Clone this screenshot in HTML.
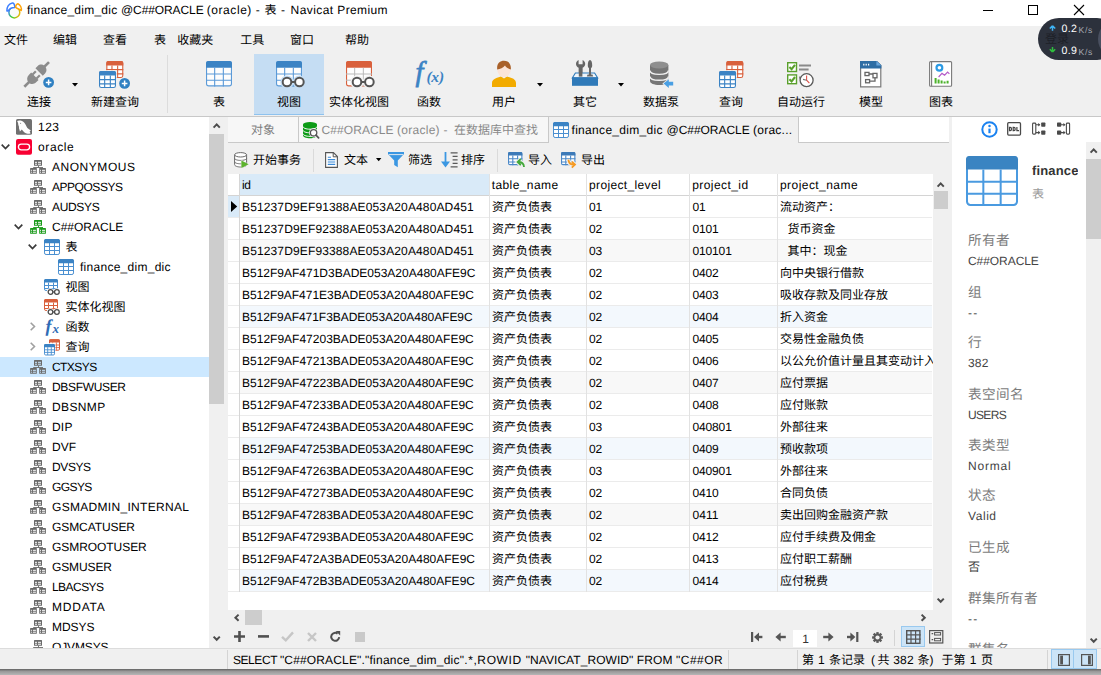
<!DOCTYPE html>
<html lang="zh"><head><meta charset="utf-8"><title>finance_dim_dic @C##ORACLE (oracle) - 表 - Navicat Premium</title><style>
html,body{margin:0;padding:0}
body{width:1101px;height:675px;overflow:hidden;background:#f0f0f0;position:relative;font-family:"Liberation Sans","Noto Sans CJK SC",sans-serif;font-size:12px;color:#000;text-rendering:geometricPrecision}
body div{position:absolute}
svg.a{position:absolute;overflow:visible}
.t{white-space:nowrap}
.t span{display:inline}
</style></head><body>
<div style="left:0px;top:0px;width:1101px;height:26px;background:#fff"></div>
<svg class="a" style="left:6px;top:2px" width="16" height="16.4" viewBox="0 0 16 16.4" ><defs><linearGradient id="lg" x1="0" y1="0.2" x2="1" y2="0.6"><stop offset="0" stop-color="#3d86f5"/><stop offset="0.5" stop-color="#3fd12f"/><stop offset="1" stop-color="#e9b80c"/></linearGradient></defs><circle cx="8.35" cy="10.45" r="5.45" fill="#fafafa" stroke="url(#lg)" stroke-width="1.5"/><path d="M0.9 8.9 C0.6 5.2 3 1.3 6.4 0.9 C8.2 0.8 8.7 3.2 8.9 5.4 C6.2 5.3 3.4 6.4 2.3 8.9 Z" fill="#fff" stroke="#3d7fff" stroke-width="1.5" stroke-linejoin="round"/><path d="M9.5 5.3 C9.8 3.6 10.8 1.9 11.9 1.7 C14.2 2.6 16 6 15.2 8.4 C14.2 7.6 11 6.6 9.5 5.3 Z" fill="#fff" stroke="#ffa40a" stroke-width="1.5" stroke-linejoin="round"/></svg>
<div class="t ttl" style="left:27px;top:0px;height:20px;line-height:20px;font-size:12px;color:#000;"><span style="letter-spacing:0.246px">finance_dim_dic&nbsp;</span><span style="letter-spacing:-0.099px">@C##ORACLE&nbsp;</span><span style="letter-spacing:0.554px">(oracle)&nbsp;</span><span style="letter-spacing:0.678px">-&nbsp;</span>表<span style="letter-spacing:1.143px">&nbsp;-&nbsp;</span><span style="letter-spacing:0.418px">Navicat&nbsp;</span><span style="letter-spacing:0.383px">Premium</span></div>
<svg class="a" style="left:975px;top:0px" width="126" height="26" viewBox="0 0 126 26" ><path d="M8 10.5H18" stroke="#000" stroke-width="1"/><rect x="53.5" y="5.5" width="9" height="9" fill="none" stroke="#000" stroke-width="1"/><path d="M99 5L109 15M109 5L99 15" stroke="#000" stroke-width="1.1"/></svg>
<div class="t " style="left:4px;top:29.7px;height:20px;line-height:20px;font-size:12px;color:#000;">文件</div>
<div class="t " style="left:53px;top:29.7px;height:20px;line-height:20px;font-size:12px;color:#000;">编辑</div>
<div class="t " style="left:103px;top:29.7px;height:20px;line-height:20px;font-size:12px;color:#000;">查看</div>
<div class="t " style="left:154px;top:29.7px;height:20px;line-height:20px;font-size:12px;color:#000;">表</div>
<div class="t " style="left:177.3px;top:29.7px;height:20px;line-height:20px;font-size:12px;color:#000;">收藏夹</div>
<div class="t " style="left:240.3px;top:29.7px;height:20px;line-height:20px;font-size:12px;color:#000;">工具</div>
<div class="t " style="left:290px;top:29.7px;height:20px;line-height:20px;font-size:12px;color:#000;">窗口</div>
<div class="t " style="left:345px;top:29.7px;height:20px;line-height:20px;font-size:12px;color:#000;">帮助</div>
<div style="left:0px;top:116px;width:1101px;height:1px;background:#c8c8c8"></div>
<div style="left:254px;top:54px;width:70px;height:61px;background:#c5ddf3;border-bottom:1.5px solid #8ec2ee;box-sizing:border-box"></div>
<svg class="a" style="left:24px;top:60px" width="32" height="28" viewBox="0 0 32 28" ><g transform="translate(12 15.1) rotate(45)" fill="#8c8c8c"><rect x="-1.3" y="8.5" width="2.6" height="8"/><path d="M-5.2 1.6 H5.2 V5 C5.2 8 3 10.4 0 10.4 C-3 10.4 -5.2 8 -5.2 5Z"/><rect x="-3.9" y="-2.6" width="2.2" height="4.6"/><rect x="1.7" y="-2.6" width="2.2" height="4.6"/><path d="M-5.2 -4.4 H5.2 V-7.6 C5.2 -10.4 3 -12.6 0 -12.6 C-3 -12.6 -5.2 -10.4 -5.2 -7.6Z"/><rect x="-1.3" y="-18.4" width="2.6" height="7"/></g><circle cx="24.6" cy="22.4" r="6.4" fill="#f0f0f0"/><circle cx="24.6" cy="22.4" r="5.4" fill="#2f80c2"/><path d="M24.6 19.6V25.2M21.8 22.4H27.4" stroke="#fff" stroke-width="1.5"/></svg>
<div class="t " style="left:27px;top:92.4px;height:20px;line-height:20px;font-size:12px;color:#000;">连接</div>
<svg class="a" style="left:72px;top:82.6px" width="6" height="4" viewBox="0 0 6 4" ><path d="M0 0H6L3 3.6Z" fill="#000"/></svg>
<svg class="a" style="left:98.8px;top:61px" width="32" height="28" viewBox="0 0 32 28" ><g transform="translate(7.3 0)"><rect x="0.55" y="0.55" width="15.9" height="15.9" rx="1.8" fill="#fff" stroke="#d9603c" stroke-width="1.1"/><path d="M0 1.8 a1.8 1.8 0 0 1 1.8 -1.8 h13.4 a1.8 1.8 0 0 1 1.8 1.8 v2.7 h-17 z" fill="#d9603c"/><path d="M0 8.66667 H17M0 12.8333 H17M5.66667 4.5 V17M11.3333 4.5 V17" stroke="#d9603c" stroke-width="1.1" fill="none"/></g><rect x="-0.8" y="9.2" width="18.6" height="9" fill="#f0f0f0"/><g transform="translate(0 10)"><rect x="0.55" y="0.55" width="15.9" height="15.9" rx="1.8" fill="#fff" stroke="#3b83c4" stroke-width="1.1"/><path d="M0 1.8 a1.8 1.8 0 0 1 1.8 -1.8 h13.4 a1.8 1.8 0 0 1 1.8 1.8 v2.7 h-17 z" fill="#3b83c4"/><path d="M0 8.66667 H17M0 12.8333 H17M5.66667 4.5 V17M11.3333 4.5 V17" stroke="#3b83c4" stroke-width="1.1" fill="none"/></g><circle cx="25.6" cy="22.4" r="6.2" fill="#f0f0f0"/><circle cx="25.6" cy="22.4" r="5.4" fill="#2f80c2"/><path d="M25.6 19.6V25.2M22.8 22.4H28.4" stroke="#fff" stroke-width="1.5"/></svg>
<div class="t " style="left:91px;top:92.4px;height:20px;line-height:20px;font-size:12px;color:#000;">新建查询</div>
<div style="left:167px;top:55px;width:1px;height:58px;background:#dcdcdc"></div>
<svg class="a" style="left:206px;top:61px" width="26" height="26" viewBox="0 0 26 26" ><rect x="0.55" y="0.55" width="24.9" height="24.3" rx="2.2" fill="#fdfdfd" stroke="#5b9ad8" stroke-width="1.1"/><path d="M0 2.2 a2.2 2.2 0 0 1 2.2 -2.2 h21.6 a2.2 2.2 0 0 1 2.2 2.2 v4.6 h-26 z" fill="#3b83c4"/><path d="M0 13 H26M0 19.2 H26M8.66667 6.8 V25.4M17.3333 6.8 V25.4" stroke="#5b9ad8" stroke-width="1.1" fill="none"/></svg>
<div class="t " style="left:213px;top:92.4px;height:20px;line-height:20px;font-size:12px;color:#000;">表</div>
<svg class="a" style="left:276px;top:61px" width="29" height="26" viewBox="0 0 29 26" ><rect x="0.55" y="0.55" width="24.9" height="24.3" rx="2.2" fill="#fdfdfd" stroke="#5b9ad8" stroke-width="1.1"/><path d="M0 2.2 a2.2 2.2 0 0 1 2.2 -2.2 h21.6 a2.2 2.2 0 0 1 2.2 2.2 v4.6 h-26 z" fill="#3b83c4"/><path d="M0 13 H26M0 19.2 H26M8.66667 6.8 V25.4M17.3333 6.8 V25.4" stroke="#5b9ad8" stroke-width="1.1" fill="none"/><g fill="#c5ddf3" stroke="#c5ddf3" stroke-width="4.6"><circle cx="11" cy="21" r="4.3"/><circle cx="23.4" cy="21" r="4.3"/><path d="M11 21 H23.4"/></g><circle cx="11" cy="21" r="4.3" fill="#fff" stroke="#555" stroke-width="2"/><circle cx="23.4" cy="21" r="4.3" fill="#fff" stroke="#555" stroke-width="2"/><path d="M15.3 21 H19.1" stroke="#555" stroke-width="2"/></svg>
<div class="t " style="left:277px;top:92.4px;height:20px;line-height:20px;font-size:12px;color:#000;">视图</div>
<svg class="a" style="left:346px;top:61px" width="29" height="26" viewBox="0 0 29 26" ><rect x="0.55" y="0.55" width="24.9" height="24.3" rx="2.2" fill="#fdfdfd" stroke="#d9603c" stroke-width="1.1"/><path d="M0 2.2 a2.2 2.2 0 0 1 2.2 -2.2 h21.6 a2.2 2.2 0 0 1 2.2 2.2 v4.6 h-26 z" fill="#d9603c"/><path d="M0 13 H26M0 19.2 H26M8.66667 6.8 V25.4M17.3333 6.8 V25.4" stroke="#b9b9b9" stroke-width="1" fill="none"/><g fill="#f0f0f0" stroke="#f0f0f0" stroke-width="4.6"><circle cx="11" cy="21" r="4.3"/><circle cx="23.4" cy="21" r="4.3"/><path d="M11 21 H23.4"/></g><circle cx="11" cy="21" r="4.3" fill="#fff" stroke="#555" stroke-width="2"/><circle cx="23.4" cy="21" r="4.3" fill="#fff" stroke="#555" stroke-width="2"/><path d="M15.3 21 H19.1" stroke="#555" stroke-width="2"/></svg>
<div class="t " style="left:329px;top:92.4px;height:20px;line-height:20px;font-size:12px;color:#000;">实体化视图</div>
<div class="t" style="left:415.6px;top:52.6px;font:italic 28.5px 'Liberation Serif',serif;color:#3b83c4;line-height:40px;height:40px;-webkit-text-stroke:0.7px #3b83c4">f</div>
<div class="t" style="left:426.4px;top:67.6px;font:italic bold 15.5px 'Liberation Serif',serif;color:#3b83c4;line-height:20px;height:20px;letter-spacing:-0.2px">(x)</div>
<div class="t " style="left:417px;top:92.4px;height:20px;line-height:20px;font-size:12px;color:#000;">函数</div>
<svg class="a" style="left:492px;top:60px" width="24" height="27" viewBox="0 0 24 27" ><path d="M0 27 V23 C0 19 5 17.5 9 16.5 L12 18.5 L15 16.5 C19 17.5 24 19 24 23 V27Z" fill="#f2ab00"/><ellipse cx="12" cy="9.6" rx="6.8" ry="7.6" fill="#fbe4d8"/><path d="M5.2 9.4 C4.6 3.6 7.8 0.8 12 0.8 C16.2 0.8 19.4 3.6 18.8 9.4 C16.4 9 14 7.6 13 5.6 C11.4 7.8 8 9.2 5.2 9.4Z" fill="#a9612a"/></svg>
<div class="t " style="left:492px;top:92.4px;height:20px;line-height:20px;font-size:12px;color:#000;">用户</div>
<svg class="a" style="left:536.6px;top:82.6px" width="6" height="4" viewBox="0 0 6 4" ><path d="M0 0H6L3 3.6Z" fill="#000"/></svg>
<svg class="a" style="left:572px;top:59px" width="26" height="28" viewBox="0 0 26 28" ><g fill="#666"><path d="M6.6 1 V5.2 H10.6 V1 C12.4 1.8 13.2 3.4 13.2 5 C13.2 6.8 12 8.2 10.4 8.8 V18 H6.8 V8.8 C5.2 8.2 4 6.8 4 5 C4 3.4 4.8 1.8 6.6 1Z"/><path d="M18 1 C19.4 1 20.2 3.4 20.2 6.6 C20.2 8 19.6 8.8 19 9.2 V15 H17 V9.2 C16.4 8.8 15.8 8 15.8 6.6 C15.8 3.4 16.6 1 18 1Z"/></g><path d="M3.4 14 H22.6 L25.6 18.8 H0.4Z" fill="#eef5fb" stroke="#2f7ab9" stroke-width="1.2"/><rect x="0" y="18.4" width="26" height="8.4" fill="#2f7ab9"/><g fill="#666"><rect x="6.8" y="8" width="3.6" height="9.6"/><rect x="17" y="9" width="2" height="7"/><path d="M15.6 15.4 h4.8 l.8 2.2 h-6.4z"/></g></svg>
<div class="t " style="left:573px;top:92.4px;height:20px;line-height:20px;font-size:12px;color:#000;">其它</div>
<svg class="a" style="left:618px;top:82.6px" width="6" height="4" viewBox="0 0 6 4" ><path d="M0 0H6L3 3.6Z" fill="#000"/></svg>
<svg class="a" style="left:649px;top:61px" width="26" height="28" viewBox="0 0 26 28" ><g fill="#767676"><path d="M1 4 V20 C1 22.4 5 24 10.2 24 C15.4 24 19.4 22.4 19.4 20 V4Z"/><ellipse cx="10.2" cy="4" rx="9.2" ry="3.4" fill="#8f8f8f"/></g><path d="M1 9.6 C1 12 5 13.4 10.2 13.4 C15.4 13.4 19.4 12 19.4 9.6 M1 15.4 C1 17.8 5 19.2 10.2 19.2 C15.4 19.2 19.4 17.8 19.4 15.4" fill="none" stroke="#f0f0f0" stroke-width="1.4"/><path d="M14.6 22.6 L19.8 18.2 V20.8 H24.2 V24.4 H19.8 V27Z" fill="#4a9fe3" stroke="#f0f0f0" stroke-width="1.6" paint-order="stroke"/></svg>
<div class="t " style="left:643px;top:92.4px;height:20px;line-height:20px;font-size:12px;color:#000;">数据泵</div>
<svg class="a" style="left:719px;top:61px" width="32" height="28" viewBox="0 0 32 28" ><g transform="translate(7.3 0)"><rect x="0.55" y="0.55" width="15.9" height="15.9" rx="1.8" fill="#fff" stroke="#d9603c" stroke-width="1.1"/><path d="M0 1.8 a1.8 1.8 0 0 1 1.8 -1.8 h13.4 a1.8 1.8 0 0 1 1.8 1.8 v2.7 h-17 z" fill="#d9603c"/><path d="M0 8.66667 H17M0 12.8333 H17M5.66667 4.5 V17M11.3333 4.5 V17" stroke="#d9603c" stroke-width="1.1" fill="none"/></g><rect x="-0.8" y="9.2" width="18.6" height="9" fill="#f0f0f0"/><g transform="translate(0 10)"><rect x="0.55" y="0.55" width="15.9" height="15.9" rx="1.8" fill="#fff" stroke="#3b83c4" stroke-width="1.1"/><path d="M0 1.8 a1.8 1.8 0 0 1 1.8 -1.8 h13.4 a1.8 1.8 0 0 1 1.8 1.8 v2.7 h-17 z" fill="#3b83c4"/><path d="M0 8.66667 H17M0 12.8333 H17M5.66667 4.5 V17M11.3333 4.5 V17" stroke="#3b83c4" stroke-width="1.1" fill="none"/></g></svg>
<div class="t " style="left:719px;top:92.4px;height:20px;line-height:20px;font-size:12px;color:#000;">查询</div>
<svg class="a" style="left:787px;top:61.5px" width="28" height="26" viewBox="0 0 28 26" ><g fill="#fff" stroke="#5aa02c" stroke-width="1.4"><rect x="0.7" y="0.7" width="8.8" height="8.8"/><rect x="0.7" y="12.9" width="8.8" height="8.8"/></g><path d="M2.4 5 L4.6 7.2 L8 2.8 M2.4 17.2 L4.6 19.4 L8 15" fill="none" stroke="#5aa02c" stroke-width="2.1"/><path d="M12 3.4 H24 M12 7.6 H21.6 M12 15.4 H14" stroke="#8a8a8a" stroke-width="2"/><circle cx="19.6" cy="18.2" r="6.5" fill="#fff" stroke="#5a5a5a" stroke-width="1.3"/><path d="M19.6 13.6 V18.2 L22.4 21.2" fill="none" stroke="#e0524a" stroke-width="1.1"/><path d="M19.6 18.2 L16 17.4" stroke="#777" stroke-width="1.1"/></svg>
<div class="t " style="left:777px;top:92.4px;height:20px;line-height:20px;font-size:12px;color:#000;">自动运行</div>
<svg class="a" style="left:860px;top:60.6px" width="21.4" height="26.4" viewBox="0 0 21.4 26.4" ><path d="M0.6 0.6 H16.6 L20.8 4.6 V25.8 H0.6Z" fill="#fff" stroke="#7a7a7a" stroke-width="1.2"/><path d="M0 0 H17 L21.4 4.2 V7.4 H0Z" fill="#2e6da4"/><path d="M16.4 0 L21.4 4.6 H16.4Z" fill="#6aa6dc"/><path d="M3.2 3.6h1.2M5.6 3.6h1.2M8 3.6h1.2" stroke="#fff" stroke-width="1.6"/><g fill="none" stroke="#666" stroke-width="1.3"><rect x="5" y="11.4" width="4" height="3.2"/><rect x="13" y="12.4" width="4" height="4.4"/><rect x="5.6" y="18.6" width="4" height="3.2"/><path d="M9 13H13M15 16.8V20.2H9.6"/></g></svg>
<div class="t " style="left:859px;top:92.4px;height:20px;line-height:20px;font-size:12px;color:#000;">模型</div>
<svg class="a" style="left:929px;top:61px" width="23.4" height="26" viewBox="0 0 23.4 26" ><rect x="0.6" y="0.6" width="22" height="24.6" rx="1" fill="#fff" stroke="#7a7a7a" stroke-width="1.1"/><path d="M2.6 0.6V25.2" stroke="#7a7a7a" stroke-width="1.1"/><circle cx="10.4" cy="6.8" r="2.9" fill="none" stroke="#2d9be4" stroke-width="2.2"/><path d="M9.6 16 L13 12.4 L15.6 14.2 L18.6 11 L20.4 12.8" fill="none" stroke="#b45cc8" stroke-width="1.2"/><path d="M6.6 17V22.6M9.6 18.4V22.6M12.6 19.4V22.6M15.6 20.4V22.6M18.6 19.8V22.6" stroke="#4db22c" stroke-width="2"/></svg>
<div class="t " style="left:929px;top:92.4px;height:20px;line-height:20px;font-size:12px;color:#000;">图表</div>
<div style="left:1038px;top:18px;width:80px;height:42px;border-radius:21px;background:#2c313c"></div>
<div style="left:1098px;top:20px;width:38px;height:38px;border-radius:19px;background:#4a5060"></div>
<div class="t " style="left:1045px;top:28.7px;height:20px;line-height:20px;font-size:12px;color:#000;"><span style="color:#1d2027">登录</span></div>
<svg class="a" style="left:1049.4px;top:24.8px" width="7" height="28" viewBox="0 0 7 28" ><path d="M3.5 0.8 L0.8 3.6 M3.5 0.8 L6.2 3.6 M3.5 1 V5.8" fill="none" stroke="#3fb4f6" stroke-width="1.5"/><path d="M3.5 27 L0.8 24.2 M3.5 27 L6.2 24.2 M3.5 26.8 V22" fill="none" stroke="#2fc03e" stroke-width="1.5"/></svg>
<div class="t " style="left:1061.6px;top:17.6px;height:20px;line-height:20px;font-size:12px;color:#fff;"><span style="letter-spacing:0.3px;font-size:10.6px">0.2</span><span style="font-size:8.6px;color:#a4a8b0;letter-spacing:0.75px;margin-left:1.2px;position:relative;top:1px">K/s</span></div>
<div class="t " style="left:1061.6px;top:39.9px;height:20px;line-height:20px;font-size:12px;color:#fff;"><span style="letter-spacing:0.3px;font-size:10.6px">0.9</span><span style="font-size:8.6px;color:#a4a8b0;letter-spacing:0.75px;margin-left:1.2px;position:relative;top:1px">K/s</span></div>
<div style="left:0px;top:117px;width:209px;height:531px;background:#fff;overflow:hidden"></div>
<div style="left:0px;top:357px;width:209px;height:20px;background:#cce8ff"></div>
<svg class="a" style="left:16px;top:119px" width="16" height="16" viewBox="0 0 16 16" ><rect width="16" height="15.8" rx="1.6" fill="#707070"/><path d="M1.1 2.1 C2 1.4 3.4 1.3 4.6 1.6 C6.6 2 8.2 3.4 9.2 5 C10.2 6.8 10.8 8.6 12 9.6 C12.8 10.4 13.8 10.8 14.8 11.2 C14.4 11.8 14 12.1 13.6 12.4 C14 13 14.4 13.6 14.6 14.2 C13.6 14.8 12.6 14.9 11.6 14.8 C10.4 14.6 9.2 14 8.2 13.2 C7.2 12.4 6.4 11.4 5.8 10.6 C5.2 11.4 4.6 12 3.9 12.4 C3.7 11.4 3.5 10.6 3.1 9.8 C2.9 9 3 8.4 3 7.8 C2.4 6.4 2.2 5.2 2.1 4.2 C1.9 3.4 1.5 2.8 1.1 2.1Z" fill="#fff"/><circle cx="4.6" cy="4.3" r="0.5" fill="#707070"/></svg>
<div class="t tr" style="left:38px;top:116.5px;height:20px;line-height:20px;font-size:12px;color:#000;letter-spacing:0.456px;">123</div>
<svg class="a" style="left:16px;top:139px" width="16" height="16" viewBox="0 0 16 16" ><rect width="16" height="15.8" rx="2" fill="#f80032"/><rect x="2.4" y="5.2" width="11.2" height="5.6" rx="2.8" fill="none" stroke="#fff" stroke-width="1.3"/></svg>
<div class="t tr" style="left:38px;top:136.5px;height:20px;line-height:20px;font-size:12px;color:#000;letter-spacing:0.619px;">oracle</div>
<svg class="a" style="left:30px;top:160px" width="16" height="14" viewBox="0 0 16 14" ><g fill="#6a6a6a"><rect x="4" y="0.1" width="8" height="5.7" rx="0.5"/><rect x="8" y="5.6" width="0.9" height="1.8"/><rect x="3.2" y="7" width="9.8" height="0.9"/><rect x="0.1" y="8.1" width="6.7" height="5.7" rx="0.5"/><rect x="9.2" y="8.1" width="6.7" height="5.7" rx="0.5"/></g><g fill="#fff"><rect x="5" y="1.8" width="2" height="1"/><rect x="8" y="1.8" width="3" height="1"/><rect x="5" y="3.7" width="2" height="1"/><rect x="8" y="3.7" width="3" height="1"/><rect x="0.9" y="9.8" width="1" height="1"/><rect x="2.9" y="9.8" width="3" height="1"/><rect x="0.9" y="11.7" width="1" height="1"/><rect x="2.9" y="11.7" width="3" height="1"/><rect x="10" y="9.8" width="1" height="1"/><rect x="12" y="9.8" width="3" height="1"/><rect x="10" y="11.7" width="1" height="1"/><rect x="12" y="11.7" width="3" height="1"/></g></svg>
<div class="t tr" style="left:52px;top:156.5px;height:20px;line-height:20px;font-size:12px;color:#000;letter-spacing:0.535px;">ANONYMOUS</div>
<svg class="a" style="left:30px;top:180px" width="16" height="14" viewBox="0 0 16 14" ><g fill="#6a6a6a"><rect x="4" y="0.1" width="8" height="5.7" rx="0.5"/><rect x="8" y="5.6" width="0.9" height="1.8"/><rect x="3.2" y="7" width="9.8" height="0.9"/><rect x="0.1" y="8.1" width="6.7" height="5.7" rx="0.5"/><rect x="9.2" y="8.1" width="6.7" height="5.7" rx="0.5"/></g><g fill="#fff"><rect x="5" y="1.8" width="2" height="1"/><rect x="8" y="1.8" width="3" height="1"/><rect x="5" y="3.7" width="2" height="1"/><rect x="8" y="3.7" width="3" height="1"/><rect x="0.9" y="9.8" width="1" height="1"/><rect x="2.9" y="9.8" width="3" height="1"/><rect x="0.9" y="11.7" width="1" height="1"/><rect x="2.9" y="11.7" width="3" height="1"/><rect x="10" y="9.8" width="1" height="1"/><rect x="12" y="9.8" width="3" height="1"/><rect x="10" y="11.7" width="1" height="1"/><rect x="12" y="11.7" width="3" height="1"/></g></svg>
<div class="t tr" style="left:52px;top:176.5px;height:20px;line-height:20px;font-size:12px;color:#000;letter-spacing:-0.467px;">APPQOSSYS</div>
<svg class="a" style="left:30px;top:200px" width="16" height="14" viewBox="0 0 16 14" ><g fill="#6a6a6a"><rect x="4" y="0.1" width="8" height="5.7" rx="0.5"/><rect x="8" y="5.6" width="0.9" height="1.8"/><rect x="3.2" y="7" width="9.8" height="0.9"/><rect x="0.1" y="8.1" width="6.7" height="5.7" rx="0.5"/><rect x="9.2" y="8.1" width="6.7" height="5.7" rx="0.5"/></g><g fill="#fff"><rect x="5" y="1.8" width="2" height="1"/><rect x="8" y="1.8" width="3" height="1"/><rect x="5" y="3.7" width="2" height="1"/><rect x="8" y="3.7" width="3" height="1"/><rect x="0.9" y="9.8" width="1" height="1"/><rect x="2.9" y="9.8" width="3" height="1"/><rect x="0.9" y="11.7" width="1" height="1"/><rect x="2.9" y="11.7" width="3" height="1"/><rect x="10" y="9.8" width="1" height="1"/><rect x="12" y="9.8" width="3" height="1"/><rect x="10" y="11.7" width="1" height="1"/><rect x="12" y="11.7" width="3" height="1"/></g></svg>
<div class="t tr" style="left:52px;top:196.5px;height:20px;line-height:20px;font-size:12px;color:#000;letter-spacing:-0.343px;">AUDSYS</div>
<svg class="a" style="left:30px;top:220px" width="16" height="14" viewBox="0 0 16 14" ><g fill="#1a9a1a"><rect x="4" y="0.1" width="8" height="5.7" rx="0.5"/><rect x="8" y="5.6" width="0.9" height="1.8"/><rect x="3.2" y="7" width="9.8" height="0.9"/><rect x="0.1" y="8.1" width="6.7" height="5.7" rx="0.5"/><rect x="9.2" y="8.1" width="6.7" height="5.7" rx="0.5"/></g><g fill="#fff"><rect x="5" y="1.8" width="2" height="1"/><rect x="8" y="1.8" width="3" height="1"/><rect x="5" y="3.7" width="2" height="1"/><rect x="8" y="3.7" width="3" height="1"/><rect x="0.9" y="9.8" width="1" height="1"/><rect x="2.9" y="9.8" width="3" height="1"/><rect x="0.9" y="11.7" width="1" height="1"/><rect x="2.9" y="11.7" width="3" height="1"/><rect x="10" y="9.8" width="1" height="1"/><rect x="12" y="9.8" width="3" height="1"/><rect x="10" y="11.7" width="1" height="1"/><rect x="12" y="11.7" width="3" height="1"/></g></svg>
<div class="t tr" style="left:52px;top:216.5px;height:20px;line-height:20px;font-size:12px;color:#000;letter-spacing:-0.008px;">C##ORACLE</div>
<svg class="a" style="left:44px;top:239px" width="16" height="16" viewBox="0 0 16 16" ><rect x="0.5" y="0.5" width="15" height="15" rx="1.6" fill="#fff" stroke="#4a8fd0" stroke-width="1"/><path d="M0 1.8 a1.8 1.8 0 0 1 1.8 -1.8 h12.4 a1.8 1.8 0 0 1 1.8 1.8 v2.4 h-16z" fill="#3b83c4"/><path d="M5.5 4V15.5M10.5 4V15.5M0.5 7.5H15.5M0.5 11.5H15.5" stroke="#4a8fd0" stroke-width="1" fill="none"/></svg>
<div class="t " style="left:65.5px;top:236.9px;height:20px;line-height:20px;font-size:12px;color:#000;">表</div>
<svg class="a" style="left:58px;top:259px" width="16" height="16" viewBox="0 0 16 16" ><rect x="0.5" y="0.5" width="15" height="15" rx="1.6" fill="#fff" stroke="#4a8fd0" stroke-width="1"/><path d="M0 1.8 a1.8 1.8 0 0 1 1.8 -1.8 h12.4 a1.8 1.8 0 0 1 1.8 1.8 v2.4 h-16z" fill="#3b83c4"/><path d="M5.5 4V15.5M10.5 4V15.5M0.5 7.5H15.5M0.5 11.5H15.5" stroke="#4a8fd0" stroke-width="1" fill="none"/></svg>
<div class="t tr" style="left:80px;top:256.5px;height:20px;line-height:20px;font-size:12px;color:#000;letter-spacing:0.272px;">finance_dim_dic</div>
<svg class="a" style="left:44px;top:279px" width="17" height="16" viewBox="0 0 17 16" ><rect x="0.5" y="0.5" width="13" height="11" rx="1.4" fill="#fff" stroke="#4a8fd0" stroke-width="1"/><path d="M0 1.6 a1.6 1.6 0 0 1 1.6 -1.6 h10.8 a1.6 1.6 0 0 1 1.6 1.6 v2 h-14z" fill="#3b83c4"/><path d="M4.5 3.6V11.5M9.5 3.6V11.5M0.5 6.5H13.5M0.5 9.5H13.5" stroke="#4a8fd0" stroke-width="1" fill="none"/><g fill="#fff" stroke="#fff" stroke-width="3.05"><circle cx="6.5" cy="13" r="2.35"/><circle cx="12.9" cy="13" r="2.35"/><path d="M6.5 13 H12.9"/></g><circle cx="6.5" cy="13" r="2.35" fill="#fff" stroke="#4a4a4a" stroke-width="1.25"/><circle cx="12.9" cy="13" r="2.35" fill="#fff" stroke="#4a4a4a" stroke-width="1.25"/><path d="M8.85 13 H10.55" stroke="#4a4a4a" stroke-width="1.25"/></svg>
<div class="t " style="left:65.5px;top:276.9px;height:20px;line-height:20px;font-size:12px;color:#000;">视图</div>
<svg class="a" style="left:44px;top:299px" width="17" height="16" viewBox="0 0 17 16" ><rect x="0.5" y="0.5" width="13" height="11" rx="1.4" fill="#fff" stroke="#d9603c" stroke-width="1"/><path d="M0 1.6 a1.6 1.6 0 0 1 1.6 -1.6 h10.8 a1.6 1.6 0 0 1 1.6 1.6 v2 h-14z" fill="#d9603c"/><path d="M4.5 3.6V11.5M9.5 3.6V11.5M0.5 6.5H13.5M0.5 9.5H13.5" stroke="#d9603c" stroke-width="1" fill="none"/><g fill="#fff" stroke="#fff" stroke-width="3.05"><circle cx="6.5" cy="13" r="2.35"/><circle cx="12.9" cy="13" r="2.35"/><path d="M6.5 13 H12.9"/></g><circle cx="6.5" cy="13" r="2.35" fill="#fff" stroke="#4a4a4a" stroke-width="1.25"/><circle cx="12.9" cy="13" r="2.35" fill="#fff" stroke="#4a4a4a" stroke-width="1.25"/><path d="M8.85 13 H10.55" stroke="#4a4a4a" stroke-width="1.25"/></svg>
<div class="t " style="left:65.5px;top:296.9px;height:20px;line-height:20px;font-size:12px;color:#000;">实体化视图</div>
<div class="t" style="left:45.5px;top:315.8px;font:italic bold 18px 'Liberation Serif',serif;color:#2f6cb5;line-height:20px;height:20px">f</div>
<div class="t" style="left:52.6px;top:318.8px;font:italic bold 13px 'Liberation Serif',serif;color:#2f6cb5;line-height:20px;height:20px">x</div>
<div class="t " style="left:65.5px;top:316.9px;height:20px;line-height:20px;font-size:12px;color:#000;">函数</div>
<svg class="a" style="left:44px;top:339px" width="16" height="17" viewBox="0 0 16 17" ><g transform="translate(5 0.2)"><rect x="0.5" y="0.5" width="10" height="10.5" rx="1.2" fill="#fff" stroke="#d9603c" stroke-width="1"/><path d="M0 1.4 a1.4 1.4 0 0 1 1.4 -1.4 h8.2 a1.4 1.4 0 0 1 1.4 1.4 v1.8 h-11z" fill="#d9603c"/><path d="M3.7 3.2V11M7.3 3.2V11M0.5 5.8H10.5M0.5 8.4H10.5" stroke="#d9603c" stroke-width="0.9" fill="none"/></g><rect x="-0.4" y="4.2" width="11.8" height="8" fill="#fff"/><g transform="translate(0 5)"><rect x="0.5" y="0.5" width="10" height="10.5" rx="1.2" fill="#fff" stroke="#4a8fd0" stroke-width="1"/><path d="M0 1.4 a1.4 1.4 0 0 1 1.4 -1.4 h8.2 a1.4 1.4 0 0 1 1.4 1.4 v1.8 h-11z" fill="#3b83c4"/><path d="M3.7 3.2V11M7.3 3.2V11M0.5 5.8H10.5M0.5 8.4H10.5" stroke="#4a8fd0" stroke-width="0.9" fill="none"/></g></svg>
<div class="t " style="left:65.5px;top:336.9px;height:20px;line-height:20px;font-size:12px;color:#000;">查询</div>
<svg class="a" style="left:30px;top:360px" width="16" height="14" viewBox="0 0 16 14" ><g fill="#6a6a6a"><rect x="4" y="0.1" width="8" height="5.7" rx="0.5"/><rect x="8" y="5.6" width="0.9" height="1.8"/><rect x="3.2" y="7" width="9.8" height="0.9"/><rect x="0.1" y="8.1" width="6.7" height="5.7" rx="0.5"/><rect x="9.2" y="8.1" width="6.7" height="5.7" rx="0.5"/></g><g fill="#cce8ff"><rect x="5" y="1.8" width="2" height="1"/><rect x="8" y="1.8" width="3" height="1"/><rect x="5" y="3.7" width="2" height="1"/><rect x="8" y="3.7" width="3" height="1"/><rect x="0.9" y="9.8" width="1" height="1"/><rect x="2.9" y="9.8" width="3" height="1"/><rect x="0.9" y="11.7" width="1" height="1"/><rect x="2.9" y="11.7" width="3" height="1"/><rect x="10" y="9.8" width="1" height="1"/><rect x="12" y="9.8" width="3" height="1"/><rect x="10" y="11.7" width="1" height="1"/><rect x="12" y="11.7" width="3" height="1"/></g></svg>
<div class="t tr" style="left:52px;top:356.5px;height:20px;line-height:20px;font-size:12px;color:#000;letter-spacing:-0.569px;">CTXSYS</div>
<svg class="a" style="left:30px;top:380px" width="16" height="14" viewBox="0 0 16 14" ><g fill="#6a6a6a"><rect x="4" y="0.1" width="8" height="5.7" rx="0.5"/><rect x="8" y="5.6" width="0.9" height="1.8"/><rect x="3.2" y="7" width="9.8" height="0.9"/><rect x="0.1" y="8.1" width="6.7" height="5.7" rx="0.5"/><rect x="9.2" y="8.1" width="6.7" height="5.7" rx="0.5"/></g><g fill="#fff"><rect x="5" y="1.8" width="2" height="1"/><rect x="8" y="1.8" width="3" height="1"/><rect x="5" y="3.7" width="2" height="1"/><rect x="8" y="3.7" width="3" height="1"/><rect x="0.9" y="9.8" width="1" height="1"/><rect x="2.9" y="9.8" width="3" height="1"/><rect x="0.9" y="11.7" width="1" height="1"/><rect x="2.9" y="11.7" width="3" height="1"/><rect x="10" y="9.8" width="1" height="1"/><rect x="12" y="9.8" width="3" height="1"/><rect x="10" y="11.7" width="1" height="1"/><rect x="12" y="11.7" width="3" height="1"/></g></svg>
<div class="t tr" style="left:52px;top:376.5px;height:20px;line-height:20px;font-size:12px;color:#000;letter-spacing:-0.330px;">DBSFWUSER</div>
<svg class="a" style="left:30px;top:400px" width="16" height="14" viewBox="0 0 16 14" ><g fill="#6a6a6a"><rect x="4" y="0.1" width="8" height="5.7" rx="0.5"/><rect x="8" y="5.6" width="0.9" height="1.8"/><rect x="3.2" y="7" width="9.8" height="0.9"/><rect x="0.1" y="8.1" width="6.7" height="5.7" rx="0.5"/><rect x="9.2" y="8.1" width="6.7" height="5.7" rx="0.5"/></g><g fill="#fff"><rect x="5" y="1.8" width="2" height="1"/><rect x="8" y="1.8" width="3" height="1"/><rect x="5" y="3.7" width="2" height="1"/><rect x="8" y="3.7" width="3" height="1"/><rect x="0.9" y="9.8" width="1" height="1"/><rect x="2.9" y="9.8" width="3" height="1"/><rect x="0.9" y="11.7" width="1" height="1"/><rect x="2.9" y="11.7" width="3" height="1"/><rect x="10" y="9.8" width="1" height="1"/><rect x="12" y="9.8" width="3" height="1"/><rect x="10" y="11.7" width="1" height="1"/><rect x="12" y="11.7" width="3" height="1"/></g></svg>
<div class="t tr" style="left:52px;top:396.5px;height:20px;line-height:20px;font-size:12px;color:#000;letter-spacing:0.376px;">DBSNMP</div>
<svg class="a" style="left:30px;top:420px" width="16" height="14" viewBox="0 0 16 14" ><g fill="#6a6a6a"><rect x="4" y="0.1" width="8" height="5.7" rx="0.5"/><rect x="8" y="5.6" width="0.9" height="1.8"/><rect x="3.2" y="7" width="9.8" height="0.9"/><rect x="0.1" y="8.1" width="6.7" height="5.7" rx="0.5"/><rect x="9.2" y="8.1" width="6.7" height="5.7" rx="0.5"/></g><g fill="#fff"><rect x="5" y="1.8" width="2" height="1"/><rect x="8" y="1.8" width="3" height="1"/><rect x="5" y="3.7" width="2" height="1"/><rect x="8" y="3.7" width="3" height="1"/><rect x="0.9" y="9.8" width="1" height="1"/><rect x="2.9" y="9.8" width="3" height="1"/><rect x="0.9" y="11.7" width="1" height="1"/><rect x="2.9" y="11.7" width="3" height="1"/><rect x="10" y="9.8" width="1" height="1"/><rect x="12" y="9.8" width="3" height="1"/><rect x="10" y="11.7" width="1" height="1"/><rect x="12" y="11.7" width="3" height="1"/></g></svg>
<div class="t tr" style="left:52px;top:416.5px;height:20px;line-height:20px;font-size:12px;color:#000;letter-spacing:0.195px;">DIP</div>
<svg class="a" style="left:30px;top:440px" width="16" height="14" viewBox="0 0 16 14" ><g fill="#6a6a6a"><rect x="4" y="0.1" width="8" height="5.7" rx="0.5"/><rect x="8" y="5.6" width="0.9" height="1.8"/><rect x="3.2" y="7" width="9.8" height="0.9"/><rect x="0.1" y="8.1" width="6.7" height="5.7" rx="0.5"/><rect x="9.2" y="8.1" width="6.7" height="5.7" rx="0.5"/></g><g fill="#fff"><rect x="5" y="1.8" width="2" height="1"/><rect x="8" y="1.8" width="3" height="1"/><rect x="5" y="3.7" width="2" height="1"/><rect x="8" y="3.7" width="3" height="1"/><rect x="0.9" y="9.8" width="1" height="1"/><rect x="2.9" y="9.8" width="3" height="1"/><rect x="0.9" y="11.7" width="1" height="1"/><rect x="2.9" y="11.7" width="3" height="1"/><rect x="10" y="9.8" width="1" height="1"/><rect x="12" y="9.8" width="3" height="1"/><rect x="10" y="11.7" width="1" height="1"/><rect x="12" y="11.7" width="3" height="1"/></g></svg>
<div class="t tr" style="left:52px;top:436.5px;height:20px;line-height:20px;font-size:12px;color:#000;letter-spacing:0.000px;">DVF</div>
<svg class="a" style="left:30px;top:460px" width="16" height="14" viewBox="0 0 16 14" ><g fill="#6a6a6a"><rect x="4" y="0.1" width="8" height="5.7" rx="0.5"/><rect x="8" y="5.6" width="0.9" height="1.8"/><rect x="3.2" y="7" width="9.8" height="0.9"/><rect x="0.1" y="8.1" width="6.7" height="5.7" rx="0.5"/><rect x="9.2" y="8.1" width="6.7" height="5.7" rx="0.5"/></g><g fill="#fff"><rect x="5" y="1.8" width="2" height="1"/><rect x="8" y="1.8" width="3" height="1"/><rect x="5" y="3.7" width="2" height="1"/><rect x="8" y="3.7" width="3" height="1"/><rect x="0.9" y="9.8" width="1" height="1"/><rect x="2.9" y="9.8" width="3" height="1"/><rect x="0.9" y="11.7" width="1" height="1"/><rect x="2.9" y="11.7" width="3" height="1"/><rect x="10" y="9.8" width="1" height="1"/><rect x="12" y="9.8" width="3" height="1"/><rect x="10" y="11.7" width="1" height="1"/><rect x="12" y="11.7" width="3" height="1"/></g></svg>
<div class="t tr" style="left:52px;top:456.5px;height:20px;line-height:20px;font-size:12px;color:#000;letter-spacing:-0.397px;">DVSYS</div>
<svg class="a" style="left:30px;top:480px" width="16" height="14" viewBox="0 0 16 14" ><g fill="#6a6a6a"><rect x="4" y="0.1" width="8" height="5.7" rx="0.5"/><rect x="8" y="5.6" width="0.9" height="1.8"/><rect x="3.2" y="7" width="9.8" height="0.9"/><rect x="0.1" y="8.1" width="6.7" height="5.7" rx="0.5"/><rect x="9.2" y="8.1" width="6.7" height="5.7" rx="0.5"/></g><g fill="#fff"><rect x="5" y="1.8" width="2" height="1"/><rect x="8" y="1.8" width="3" height="1"/><rect x="5" y="3.7" width="2" height="1"/><rect x="8" y="3.7" width="3" height="1"/><rect x="0.9" y="9.8" width="1" height="1"/><rect x="2.9" y="9.8" width="3" height="1"/><rect x="0.9" y="11.7" width="1" height="1"/><rect x="2.9" y="11.7" width="3" height="1"/><rect x="10" y="9.8" width="1" height="1"/><rect x="12" y="9.8" width="3" height="1"/><rect x="10" y="11.7" width="1" height="1"/><rect x="12" y="11.7" width="3" height="1"/></g></svg>
<div class="t tr" style="left:52px;top:476.5px;height:20px;line-height:20px;font-size:12px;color:#000;letter-spacing:-0.597px;">GGSYS</div>
<svg class="a" style="left:30px;top:500px" width="16" height="14" viewBox="0 0 16 14" ><g fill="#6a6a6a"><rect x="4" y="0.1" width="8" height="5.7" rx="0.5"/><rect x="8" y="5.6" width="0.9" height="1.8"/><rect x="3.2" y="7" width="9.8" height="0.9"/><rect x="0.1" y="8.1" width="6.7" height="5.7" rx="0.5"/><rect x="9.2" y="8.1" width="6.7" height="5.7" rx="0.5"/></g><g fill="#fff"><rect x="5" y="1.8" width="2" height="1"/><rect x="8" y="1.8" width="3" height="1"/><rect x="5" y="3.7" width="2" height="1"/><rect x="8" y="3.7" width="3" height="1"/><rect x="0.9" y="9.8" width="1" height="1"/><rect x="2.9" y="9.8" width="3" height="1"/><rect x="0.9" y="11.7" width="1" height="1"/><rect x="2.9" y="11.7" width="3" height="1"/><rect x="10" y="9.8" width="1" height="1"/><rect x="12" y="9.8" width="3" height="1"/><rect x="10" y="11.7" width="1" height="1"/><rect x="12" y="11.7" width="3" height="1"/></g></svg>
<div class="t tr" style="left:52px;top:496.5px;height:20px;line-height:20px;font-size:12px;color:#000;letter-spacing:0.304px;">GSMADMIN_INTERNAL</div>
<svg class="a" style="left:30px;top:520px" width="16" height="14" viewBox="0 0 16 14" ><g fill="#6a6a6a"><rect x="4" y="0.1" width="8" height="5.7" rx="0.5"/><rect x="8" y="5.6" width="0.9" height="1.8"/><rect x="3.2" y="7" width="9.8" height="0.9"/><rect x="0.1" y="8.1" width="6.7" height="5.7" rx="0.5"/><rect x="9.2" y="8.1" width="6.7" height="5.7" rx="0.5"/></g><g fill="#fff"><rect x="5" y="1.8" width="2" height="1"/><rect x="8" y="1.8" width="3" height="1"/><rect x="5" y="3.7" width="2" height="1"/><rect x="8" y="3.7" width="3" height="1"/><rect x="0.9" y="9.8" width="1" height="1"/><rect x="2.9" y="9.8" width="3" height="1"/><rect x="0.9" y="11.7" width="1" height="1"/><rect x="2.9" y="11.7" width="3" height="1"/><rect x="10" y="9.8" width="1" height="1"/><rect x="12" y="9.8" width="3" height="1"/><rect x="10" y="11.7" width="1" height="1"/><rect x="12" y="11.7" width="3" height="1"/></g></svg>
<div class="t tr" style="left:52px;top:516.5px;height:20px;line-height:20px;font-size:12px;color:#000;letter-spacing:-0.090px;">GSMCATUSER</div>
<svg class="a" style="left:30px;top:540px" width="16" height="14" viewBox="0 0 16 14" ><g fill="#6a6a6a"><rect x="4" y="0.1" width="8" height="5.7" rx="0.5"/><rect x="8" y="5.6" width="0.9" height="1.8"/><rect x="3.2" y="7" width="9.8" height="0.9"/><rect x="0.1" y="8.1" width="6.7" height="5.7" rx="0.5"/><rect x="9.2" y="8.1" width="6.7" height="5.7" rx="0.5"/></g><g fill="#fff"><rect x="5" y="1.8" width="2" height="1"/><rect x="8" y="1.8" width="3" height="1"/><rect x="5" y="3.7" width="2" height="1"/><rect x="8" y="3.7" width="3" height="1"/><rect x="0.9" y="9.8" width="1" height="1"/><rect x="2.9" y="9.8" width="3" height="1"/><rect x="0.9" y="11.7" width="1" height="1"/><rect x="2.9" y="11.7" width="3" height="1"/><rect x="10" y="9.8" width="1" height="1"/><rect x="12" y="9.8" width="3" height="1"/><rect x="10" y="11.7" width="1" height="1"/><rect x="12" y="11.7" width="3" height="1"/></g></svg>
<div class="t tr" style="left:52px;top:536.5px;height:20px;line-height:20px;font-size:12px;color:#000;letter-spacing:-0.059px;">GSMROOTUSER</div>
<svg class="a" style="left:30px;top:560px" width="16" height="14" viewBox="0 0 16 14" ><g fill="#6a6a6a"><rect x="4" y="0.1" width="8" height="5.7" rx="0.5"/><rect x="8" y="5.6" width="0.9" height="1.8"/><rect x="3.2" y="7" width="9.8" height="0.9"/><rect x="0.1" y="8.1" width="6.7" height="5.7" rx="0.5"/><rect x="9.2" y="8.1" width="6.7" height="5.7" rx="0.5"/></g><g fill="#fff"><rect x="5" y="1.8" width="2" height="1"/><rect x="8" y="1.8" width="3" height="1"/><rect x="5" y="3.7" width="2" height="1"/><rect x="8" y="3.7" width="3" height="1"/><rect x="0.9" y="9.8" width="1" height="1"/><rect x="2.9" y="9.8" width="3" height="1"/><rect x="0.9" y="11.7" width="1" height="1"/><rect x="2.9" y="11.7" width="3" height="1"/><rect x="10" y="9.8" width="1" height="1"/><rect x="12" y="9.8" width="3" height="1"/><rect x="10" y="11.7" width="1" height="1"/><rect x="12" y="11.7" width="3" height="1"/></g></svg>
<div class="t tr" style="left:52px;top:556.5px;height:20px;line-height:20px;font-size:12px;color:#000;letter-spacing:-0.113px;">GSMUSER</div>
<svg class="a" style="left:30px;top:580px" width="16" height="14" viewBox="0 0 16 14" ><g fill="#6a6a6a"><rect x="4" y="0.1" width="8" height="5.7" rx="0.5"/><rect x="8" y="5.6" width="0.9" height="1.8"/><rect x="3.2" y="7" width="9.8" height="0.9"/><rect x="0.1" y="8.1" width="6.7" height="5.7" rx="0.5"/><rect x="9.2" y="8.1" width="6.7" height="5.7" rx="0.5"/></g><g fill="#fff"><rect x="5" y="1.8" width="2" height="1"/><rect x="8" y="1.8" width="3" height="1"/><rect x="5" y="3.7" width="2" height="1"/><rect x="8" y="3.7" width="3" height="1"/><rect x="0.9" y="9.8" width="1" height="1"/><rect x="2.9" y="9.8" width="3" height="1"/><rect x="0.9" y="11.7" width="1" height="1"/><rect x="2.9" y="11.7" width="3" height="1"/><rect x="10" y="9.8" width="1" height="1"/><rect x="12" y="9.8" width="3" height="1"/><rect x="10" y="11.7" width="1" height="1"/><rect x="12" y="11.7" width="3" height="1"/></g></svg>
<div class="t tr" style="left:52px;top:576.5px;height:20px;line-height:20px;font-size:12px;color:#000;letter-spacing:-0.551px;">LBACSYS</div>
<svg class="a" style="left:30px;top:600px" width="16" height="14" viewBox="0 0 16 14" ><g fill="#6a6a6a"><rect x="4" y="0.1" width="8" height="5.7" rx="0.5"/><rect x="8" y="5.6" width="0.9" height="1.8"/><rect x="3.2" y="7" width="9.8" height="0.9"/><rect x="0.1" y="8.1" width="6.7" height="5.7" rx="0.5"/><rect x="9.2" y="8.1" width="6.7" height="5.7" rx="0.5"/></g><g fill="#fff"><rect x="5" y="1.8" width="2" height="1"/><rect x="8" y="1.8" width="3" height="1"/><rect x="5" y="3.7" width="2" height="1"/><rect x="8" y="3.7" width="3" height="1"/><rect x="0.9" y="9.8" width="1" height="1"/><rect x="2.9" y="9.8" width="3" height="1"/><rect x="0.9" y="11.7" width="1" height="1"/><rect x="2.9" y="11.7" width="3" height="1"/><rect x="10" y="9.8" width="1" height="1"/><rect x="12" y="9.8" width="3" height="1"/><rect x="10" y="11.7" width="1" height="1"/><rect x="12" y="11.7" width="3" height="1"/></g></svg>
<div class="t tr" style="left:52px;top:596.5px;height:20px;line-height:20px;font-size:12px;color:#000;letter-spacing:0.785px;">MDDATA</div>
<svg class="a" style="left:30px;top:620px" width="16" height="14" viewBox="0 0 16 14" ><g fill="#6a6a6a"><rect x="4" y="0.1" width="8" height="5.7" rx="0.5"/><rect x="8" y="5.6" width="0.9" height="1.8"/><rect x="3.2" y="7" width="9.8" height="0.9"/><rect x="0.1" y="8.1" width="6.7" height="5.7" rx="0.5"/><rect x="9.2" y="8.1" width="6.7" height="5.7" rx="0.5"/></g><g fill="#fff"><rect x="5" y="1.8" width="2" height="1"/><rect x="8" y="1.8" width="3" height="1"/><rect x="5" y="3.7" width="2" height="1"/><rect x="8" y="3.7" width="3" height="1"/><rect x="0.9" y="9.8" width="1" height="1"/><rect x="2.9" y="9.8" width="3" height="1"/><rect x="0.9" y="11.7" width="1" height="1"/><rect x="2.9" y="11.7" width="3" height="1"/><rect x="10" y="9.8" width="1" height="1"/><rect x="12" y="9.8" width="3" height="1"/><rect x="10" y="11.7" width="1" height="1"/><rect x="12" y="11.7" width="3" height="1"/></g></svg>
<div class="t tr" style="left:52px;top:616.5px;height:20px;line-height:20px;font-size:12px;color:#000;letter-spacing:-0.037px;">MDSYS</div>
<svg class="a" style="left:30px;top:640px" width="16" height="14" viewBox="0 0 16 14" ><g fill="#6a6a6a"><rect x="4" y="0.1" width="8" height="5.7" rx="0.5"/><rect x="8" y="5.6" width="0.9" height="1.8"/><rect x="3.2" y="7" width="9.8" height="0.9"/><rect x="0.1" y="8.1" width="6.7" height="5.7" rx="0.5"/><rect x="9.2" y="8.1" width="6.7" height="5.7" rx="0.5"/></g><g fill="#fff"><rect x="5" y="1.8" width="2" height="1"/><rect x="8" y="1.8" width="3" height="1"/><rect x="5" y="3.7" width="2" height="1"/><rect x="8" y="3.7" width="3" height="1"/><rect x="0.9" y="9.8" width="1" height="1"/><rect x="2.9" y="9.8" width="3" height="1"/><rect x="0.9" y="11.7" width="1" height="1"/><rect x="2.9" y="11.7" width="3" height="1"/><rect x="10" y="9.8" width="1" height="1"/><rect x="12" y="9.8" width="3" height="1"/><rect x="10" y="11.7" width="1" height="1"/><rect x="12" y="11.7" width="3" height="1"/></g></svg>
<div class="t tr" style="left:52px;top:636.5px;height:20px;line-height:20px;font-size:12px;color:#000;letter-spacing:-0.137px;">OJVMSYS</div>
<svg class="a" style="left:1px;top:144.4px" width="9" height="5.4" viewBox="0 0 9 5.4" ><path d="M0.7 0.7 L4.5 4.5 L8.3 0.7" fill="none" stroke="#3a3a3a" stroke-width="1.7"/></svg>
<svg class="a" style="left:14.4px;top:224.4px" width="9" height="5.4" viewBox="0 0 9 5.4" ><path d="M0.7 0.7 L4.5 4.5 L8.3 0.7" fill="none" stroke="#3a3a3a" stroke-width="1.7"/></svg>
<svg class="a" style="left:28.4px;top:244.4px" width="9" height="5.4" viewBox="0 0 9 5.4" ><path d="M0.7 0.7 L4.5 4.5 L8.3 0.7" fill="none" stroke="#3a3a3a" stroke-width="1.7"/></svg>
<svg class="a" style="left:30px;top:322.4px" width="5.4" height="9" viewBox="0 0 5.4 9" ><path d="M0.7 0.7 L4.5 4.5 L0.7 8.3" fill="none" stroke="#a0a0a0" stroke-width="1.6"/></svg>
<svg class="a" style="left:30px;top:342.4px" width="5.4" height="9" viewBox="0 0 5.4 9" ><path d="M0.7 0.7 L4.5 4.5 L0.7 8.3" fill="none" stroke="#a0a0a0" stroke-width="1.6"/></svg>
<div style="left:209px;top:117px;width:17px;height:531px;background:#f0f0f0"></div>
<div style="left:209px;top:134px;width:15px;height:270px;background:#cdcdcd"></div>
<svg class="a" style="left:212.9px;top:123.4px" width="7.4" height="5.2" viewBox="0 0 7.4 5.2" ><path d="M0.6 4.6 L3.7 1.4 L6.8 4.6" fill="none" stroke="#4d4d4d" stroke-width="2"/></svg>
<svg class="a" style="left:212.9px;top:635.8px" width="7.4" height="5.2" viewBox="0 0 7.4 5.2" ><path d="M0.6 0.6 L3.7 3.8 L6.8 0.6" fill="none" stroke="#4d4d4d" stroke-width="2"/></svg>
<div style="left:228px;top:117px;width:71px;height:26px;background:#f7f7f7;border-right:1px solid #c9c9c9;border-bottom:1px solid #c9c9c9;box-sizing:border-box"></div>
<div class="t " style="left:251px;top:120.2px;height:20px;line-height:20px;font-size:12px;color:#000;"><span style="color:#808080">对象</span></div>
<div style="left:299px;top:117px;width:250px;height:26px;background:#f7f7f7;border-right:1px solid #c9c9c9;border-bottom:1px solid #c9c9c9;box-sizing:border-box"></div>
<svg class="a" style="left:303px;top:121.6px" width="16" height="16.6" viewBox="0 0 16 16.6" ><g fill="#0c9b16"><path d="M0 2.6 V13.4 C0 14.8 3 16.2 7 16.2 C11 16.2 14 14.8 14 13.4 V2.6Z"/><ellipse cx="7" cy="2.6" rx="7" ry="2.6"/></g><path d="M0 4.6 C0 6 3 7.2 7 7.2 C11 7.2 14 6 14 4.6 M0 8.2 C0 9.6 3 10.8 7 10.8 C11 10.8 14 9.6 14 8.2 M0 11.8 C0 13.2 3 14.4 7 14.4 C11 14.4 14 13.2 14 11.8" fill="none" stroke="#f7f7f7" stroke-width="1"/><circle cx="10.6" cy="10.8" r="4.6" fill="#f7f7f7"/><path d="M12 12.6 L16.4 17" stroke="#f7f7f7" stroke-width="3.4"/><circle cx="10.6" cy="10.8" r="3.2" fill="#fdfdfd" stroke="#555" stroke-width="1.3"/><path d="M13 13.2 L15.6 15.8" stroke="#555" stroke-width="1.7" stroke-linecap="round"/></svg>
<div class="t tab2" style="left:321.5px;top:119.5px;height:20px;line-height:20px;font-size:12px;color:#8a8a8a;"><span style="letter-spacing:0.080px">C##ORACLE&nbsp;</span><span style="letter-spacing:0.276px">(oracle)&nbsp;</span><span style="letter-spacing:1.578px">-&nbsp;</span>在数据库中查找</div>
<svg class="a" style="left:552.5px;top:121.6px" width="16" height="16" viewBox="0 0 16 16" ><rect x="0.5" y="0.5" width="15" height="15" rx="1.6" fill="#fff" stroke="#4a8fd0" stroke-width="1"/><path d="M0 1.8 a1.8 1.8 0 0 1 1.8 -1.8 h12.4 a1.8 1.8 0 0 1 1.8 1.8 v2.4 h-16z" fill="#3b83c4"/><path d="M5.5 4V15.5M10.5 4V15.5M0.5 7.5H15.5M0.5 11.5H15.5" stroke="#4a8fd0" stroke-width="1" fill="none"/></svg>
<div class="t tab3" style="left:571.5px;top:119.5px;height:20px;line-height:20px;font-size:12px;color:#000;"><span style="letter-spacing:0.309px">finance_dim_dic&nbsp;</span><span style="letter-spacing:-0.036px">@C##ORACLE&nbsp;</span><span style="letter-spacing:0.245px">(orac...</span></div>
<div style="left:798px;top:117px;width:151px;height:26px;background:#fff;border-left:1px solid #c9c9c9;border-bottom:1px solid #c9c9c9;box-sizing:border-box"></div>
<svg class="a" style="left:234px;top:152px" width="15" height="16" viewBox="0 0 15 16" ><g fill="#fff" stroke="#6a6a6a" stroke-width="1"><path d="M0.6 2.8 V12.6 C0.6 14 3.4 15 6.6 15 C9.8 15 12.6 14 12.6 12.6 V2.8"/><ellipse cx="6.6" cy="2.8" rx="6" ry="2.2"/><path d="M0.6 6.2 C0.6 7.6 3.4 8.4 6.6 8.4 C9.8 8.4 12.6 7.6 12.6 6.2 M0.6 9.6 C0.6 11 3.4 11.8 6.6 11.8 C9.8 11.8 12.6 11 12.6 9.6" fill="none"/></g><path d="M7.4 8.4 L14.6 12.2 L7.4 16Z" fill="#5db32e" stroke="#f0f0f0" stroke-width="0.8" paint-order="stroke"/></svg>
<div class="t " style="left:253px;top:150.3px;height:20px;line-height:20px;font-size:12px;color:#000;">开始事务</div>
<div style="left:313px;top:149px;width:1px;height:23px;background:#dadada"></div>
<svg class="a" style="left:325px;top:152px" width="13" height="16" viewBox="0 0 13 16" ><path d="M0.6 0.6 H8.4 L12.4 4.6 V15.4 H0.6Z" fill="#fff" stroke="#555" stroke-width="1.1"/><path d="M8.2 0.8 V4.8 H12.2" fill="none" stroke="#555" stroke-width="1"/><path d="M2.8 5.2H6M2.8 7.6H10.2M2.8 10H10.2M2.8 12.4H10.2" stroke="#3b8ad8" stroke-width="1.1"/></svg>
<div class="t " style="left:344px;top:150.3px;height:20px;line-height:20px;font-size:12px;color:#000;">文本</div>
<svg class="a" style="left:376px;top:158.4px" width="5.4" height="3.4" viewBox="0 0 5.4 3.4" ><path d="M0 0H5.4L2.7 3.2Z" fill="#000"/></svg>
<svg class="a" style="left:388px;top:152.4px" width="16" height="15" viewBox="0 0 16 15" ><path d="M0 0 H16 V2 L9.8 8.6 V15.2 L6.2 13 V8.6 L0 2Z" fill="#3b97e2"/><path d="M1 2.6H15" stroke="#f0f0f0" stroke-width="0.9"/></svg>
<div class="t " style="left:408px;top:150.3px;height:20px;line-height:20px;font-size:12px;color:#000;">筛选</div>
<svg class="a" style="left:441px;top:152px" width="17" height="16" viewBox="0 0 17 16" ><path d="M4.5 0 V11" fill="none" stroke="#3b97e2" stroke-width="1.8"/><path d="M0 9.4 H9 L4.5 15.6Z" fill="#3b97e2"/><path d="M9.6 0.9H16.6 M11.6 4.4H16.6 M11.6 7.9H16.6 M11.6 11.4H16.6 M9.6 14.9H16.6" stroke="#5a5a5a" stroke-width="1.1"/></svg>
<div class="t " style="left:461px;top:150.3px;height:20px;line-height:20px;font-size:12px;color:#000;">排序</div>
<div style="left:497px;top:149px;width:1px;height:23px;background:#dadada"></div>
<svg class="a" style="left:508px;top:152.4px" width="17" height="16" viewBox="0 0 17 16" ><rect x="0.55" y="0.55" width="13.3" height="12.1" rx="1.4" fill="#fff" stroke="#4a88c8" stroke-width="1.1"/><path d="M0 1.4 a1.4 1.4 0 0 1 1.4 -1.4 h11.6 a1.4 1.4 0 0 1 1.4 1.4 v2.2 h-14.4 z" fill="#3d7ab8"/><path d="M0 6.8 H14.4M0 10 H14.4M4.8 3.6 V13.2M9.6 3.6 V13.2" stroke="#4a88c8" stroke-width="1.1" fill="none"/><path d="M16 15 C15.8 11.4 13.4 10 10.4 10 M12.8 7 L9.6 10 L12.8 13.2" fill="none" stroke="#f0f0f0" stroke-width="4"/><path d="M16 15 C15.8 11.4 13.4 10 10.4 10 M12.8 7 L9.6 10 L12.8 13.2" fill="none" stroke="#43a83a" stroke-width="1.8"/></svg>
<div class="t " style="left:528px;top:150.3px;height:20px;line-height:20px;font-size:12px;color:#000;">导入</div>
<svg class="a" style="left:561px;top:152.4px" width="17" height="16" viewBox="0 0 17 16" ><rect x="0.55" y="0.55" width="13.3" height="12.1" rx="1.4" fill="#fff" stroke="#4a88c8" stroke-width="1.1"/><path d="M0 1.4 a1.4 1.4 0 0 1 1.4 -1.4 h11.6 a1.4 1.4 0 0 1 1.4 1.4 v2.2 h-14.4 z" fill="#3d7ab8"/><path d="M0 6.8 H14.4M0 10 H14.4M4.8 3.6 V13.2M9.6 3.6 V13.2" stroke="#4a88c8" stroke-width="1.1" fill="none"/><path d="M7.4 7.6 C7.6 11.2 10 12.6 13 12.6 M10.8 9.6 L14 12.6 L10.8 15.6" fill="none" stroke="#f0f0f0" stroke-width="4"/><path d="M7.4 7.6 C7.6 11.2 10 12.6 13 12.6 M10.8 9.6 L14 12.6 L10.8 15.6" fill="none" stroke="#f59a23" stroke-width="1.8"/></svg>
<div class="t " style="left:581px;top:150.3px;height:20px;line-height:20px;font-size:12px;color:#000;">导出</div>
<div style="left:228px;top:174px;width:705px;height:436px;background:#fff"></div>
<div style="left:240px;top:174px;width:249px;height:21px;background:#d9eaf8"></div>
<div style="left:228px;top:195px;width:705px;height:1px;background:#d4d4d4"></div>
<div style="left:228px;top:217px;width:704px;height:1px;background:#ebebeb"></div>
<div style="left:228px;top:239px;width:704px;height:1px;background:#ebebeb"></div>
<div style="left:240px;top:240px;width:692px;height:21px;background:#f8f8f8"></div>
<div style="left:228px;top:261px;width:704px;height:1px;background:#ebebeb"></div>
<div style="left:228px;top:283px;width:704px;height:1px;background:#ebebeb"></div>
<div style="left:228px;top:305px;width:704px;height:1px;background:#ebebeb"></div>
<div style="left:240px;top:306px;width:692px;height:21px;background:#f3f8fd"></div>
<div style="left:228px;top:327px;width:704px;height:1px;background:#ebebeb"></div>
<div style="left:228px;top:349px;width:704px;height:1px;background:#ebebeb"></div>
<div style="left:228px;top:371px;width:704px;height:1px;background:#ebebeb"></div>
<div style="left:240px;top:372px;width:692px;height:21px;background:#f8f8f8"></div>
<div style="left:228px;top:393px;width:704px;height:1px;background:#ebebeb"></div>
<div style="left:228px;top:415px;width:704px;height:1px;background:#ebebeb"></div>
<div style="left:228px;top:437px;width:704px;height:1px;background:#ebebeb"></div>
<div style="left:240px;top:438px;width:692px;height:21px;background:#f3f8fd"></div>
<div style="left:228px;top:459px;width:704px;height:1px;background:#ebebeb"></div>
<div style="left:228px;top:481px;width:704px;height:1px;background:#ebebeb"></div>
<div style="left:228px;top:503px;width:704px;height:1px;background:#ebebeb"></div>
<div style="left:240px;top:504px;width:692px;height:21px;background:#f8f8f8"></div>
<div style="left:228px;top:525px;width:704px;height:1px;background:#ebebeb"></div>
<div style="left:228px;top:547px;width:704px;height:1px;background:#ebebeb"></div>
<div style="left:228px;top:569px;width:704px;height:1px;background:#ebebeb"></div>
<div style="left:240px;top:570px;width:692px;height:21px;background:#f3f8fd"></div>
<div style="left:228px;top:591px;width:704px;height:1px;background:#ebebeb"></div>
<div style="left:228px;top:196px;width:11px;height:21px;background:#d9eaf8"></div>
<div style="left:239px;top:174px;width:1px;height:418px;background:#e2e2e2"></div>
<div style="left:489px;top:174px;width:1px;height:418px;background:#e2e2e2"></div>
<div style="left:586px;top:174px;width:1px;height:418px;background:#e2e2e2"></div>
<div style="left:689px;top:174px;width:1px;height:418px;background:#e2e2e2"></div>
<div style="left:777px;top:174px;width:1px;height:418px;background:#e2e2e2"></div>
<div style="left:239px;top:174px;width:1px;height:418px;background:#d6d6d6"></div>
<svg class="a" style="left:231.2px;top:201px" width="6.2" height="11" viewBox="0 0 6.2 11" ><path d="M0 0 L6.2 5.5 L0 11Z" fill="#000"/></svg>
<div class="t hd" style="left:242px;top:175px;height:20px;line-height:20px;font-size:12px;color:#000;letter-spacing:-0.372px;">id</div>
<div class="t hd" style="left:491.7px;top:175px;height:20px;line-height:20px;font-size:12px;color:#000;letter-spacing:0.408px;">table_name</div>
<div class="t hd" style="left:589px;top:175px;height:20px;line-height:20px;font-size:12px;color:#000;letter-spacing:0.356px;">project_level</div>
<div class="t hd" style="left:692.2px;top:175px;height:20px;line-height:20px;font-size:12px;color:#000;letter-spacing:0.437px;">project_id</div>
<div class="t hd" style="left:780px;top:175px;height:20px;line-height:20px;font-size:12px;color:#000;letter-spacing:0.440px;">project_name</div>
<div class="t cell" style="left:242px;top:197px;height:20px;line-height:20px;font-size:12px;color:#000;letter-spacing:0.134px;">B51237D9EF91388AE053A20A480AD451</div>
<div class="t " style="left:492px;top:196.6px;height:20px;line-height:20px;font-size:12px;color:#000;">资产负债表</div>
<div class="t cell" style="left:589px;top:197px;height:20px;line-height:20px;font-size:12px;color:#000;letter-spacing:-0.080px;">01</div>
<div class="t cell" style="left:692.4px;top:197px;height:20px;line-height:20px;font-size:12px;color:#000;letter-spacing:-0.130px;">01</div>
<div class="t " style="left:780px;top:196.6px;height:20px;line-height:20px;font-size:12px;color:#000;">流动资产：</div>
<div class="t cell" style="left:242px;top:219px;height:20px;line-height:20px;font-size:12px;color:#000;letter-spacing:0.134px;">B51237D9EF92388AE053A20A480AD451</div>
<div class="t " style="left:492px;top:218.6px;height:20px;line-height:20px;font-size:12px;color:#000;">资产负债表</div>
<div class="t cell" style="left:589px;top:219px;height:20px;line-height:20px;font-size:12px;color:#000;letter-spacing:-0.080px;">02</div>
<div class="t cell" style="left:692.4px;top:219px;height:20px;line-height:20px;font-size:12px;color:#000;letter-spacing:-0.126px;">0101</div>
<div class="t " style="left:787.4px;top:218.6px;height:20px;line-height:20px;font-size:12px;color:#000;">货币资金</div>
<div class="t cell" style="left:242px;top:241px;height:20px;line-height:20px;font-size:12px;color:#000;letter-spacing:0.134px;">B51237D9EF93388AE053A20A480AD451</div>
<div class="t " style="left:492px;top:240.6px;height:20px;line-height:20px;font-size:12px;color:#000;">资产负债表</div>
<div class="t cell" style="left:589px;top:241px;height:20px;line-height:20px;font-size:12px;color:#000;letter-spacing:-0.080px;">03</div>
<div class="t cell" style="left:692.4px;top:241px;height:20px;line-height:20px;font-size:12px;color:#000;letter-spacing:-0.124px;">010101</div>
<div class="t " style="left:787.4px;top:240.6px;height:20px;line-height:20px;font-size:12px;color:#000;">其中：现金</div>
<div class="t cell" style="left:242px;top:263px;height:20px;line-height:20px;font-size:12px;color:#000;letter-spacing:-0.003px;">B512F9AF471D3BADE053A20A480AFE9C</div>
<div class="t " style="left:492px;top:262.6px;height:20px;line-height:20px;font-size:12px;color:#000;">资产负债表</div>
<div class="t cell" style="left:589px;top:263px;height:20px;line-height:20px;font-size:12px;color:#000;letter-spacing:-0.080px;">02</div>
<div class="t cell" style="left:692.4px;top:263px;height:20px;line-height:20px;font-size:12px;color:#000;letter-spacing:-0.126px;">0402</div>
<div class="t " style="left:780px;top:262.6px;height:20px;line-height:20px;font-size:12px;color:#000;">向中央银行借款</div>
<div class="t cell" style="left:242px;top:285px;height:20px;line-height:20px;font-size:12px;color:#000;letter-spacing:-0.032px;">B512F9AF471E3BADE053A20A480AFE9C</div>
<div class="t " style="left:492px;top:284.6px;height:20px;line-height:20px;font-size:12px;color:#000;">资产负债表</div>
<div class="t cell" style="left:589px;top:285px;height:20px;line-height:20px;font-size:12px;color:#000;letter-spacing:-0.080px;">02</div>
<div class="t cell" style="left:692.4px;top:285px;height:20px;line-height:20px;font-size:12px;color:#000;letter-spacing:-0.126px;">0403</div>
<div class="t " style="left:780px;top:284.6px;height:20px;line-height:20px;font-size:12px;color:#000;">吸收存款及同业存放</div>
<div class="t cell" style="left:242px;top:307px;height:20px;line-height:20px;font-size:12px;color:#000;letter-spacing:-0.049px;">B512F9AF471F3BADE053A20A480AFE9C</div>
<div class="t " style="left:492px;top:306.6px;height:20px;line-height:20px;font-size:12px;color:#000;">资产负债表</div>
<div class="t cell" style="left:589px;top:307px;height:20px;line-height:20px;font-size:12px;color:#000;letter-spacing:-0.080px;">02</div>
<div class="t cell" style="left:692.4px;top:307px;height:20px;line-height:20px;font-size:12px;color:#000;letter-spacing:-0.126px;">0404</div>
<div class="t " style="left:780px;top:306.6px;height:20px;line-height:20px;font-size:12px;color:#000;">折入资金</div>
<div class="t cell" style="left:242px;top:329px;height:20px;line-height:20px;font-size:12px;color:#000;letter-spacing:0.009px;">B512F9AF47203BADE053A20A480AFE9C</div>
<div class="t " style="left:492px;top:328.6px;height:20px;line-height:20px;font-size:12px;color:#000;">资产负债表</div>
<div class="t cell" style="left:589px;top:329px;height:20px;line-height:20px;font-size:12px;color:#000;letter-spacing:-0.080px;">02</div>
<div class="t cell" style="left:692.4px;top:329px;height:20px;line-height:20px;font-size:12px;color:#000;letter-spacing:-0.126px;">0405</div>
<div class="t " style="left:780px;top:328.6px;height:20px;line-height:20px;font-size:12px;color:#000;">交易性金融负债</div>
<div class="t cell" style="left:242px;top:351px;height:20px;line-height:20px;font-size:12px;color:#000;letter-spacing:0.009px;">B512F9AF47213BADE053A20A480AFE9C</div>
<div class="t " style="left:492px;top:350.6px;height:20px;line-height:20px;font-size:12px;color:#000;">资产负债表</div>
<div class="t cell" style="left:589px;top:351px;height:20px;line-height:20px;font-size:12px;color:#000;letter-spacing:-0.080px;">02</div>
<div class="t cell" style="left:692.4px;top:351px;height:20px;line-height:20px;font-size:12px;color:#000;letter-spacing:-0.126px;">0406</div>
<div style="left:780px;top:350.6px;width:152.5px;height:20px;overflow:hidden">
<div class="t" style="left:0;top:0;height:20px;line-height:20px;font-size:12px">以公允价值计量且其变动计入</div></div>
<div class="t cell" style="left:242px;top:373px;height:20px;line-height:20px;font-size:12px;color:#000;letter-spacing:0.009px;">B512F9AF47223BADE053A20A480AFE9C</div>
<div class="t " style="left:492px;top:372.6px;height:20px;line-height:20px;font-size:12px;color:#000;">资产负债表</div>
<div class="t cell" style="left:589px;top:373px;height:20px;line-height:20px;font-size:12px;color:#000;letter-spacing:-0.080px;">02</div>
<div class="t cell" style="left:692.4px;top:373px;height:20px;line-height:20px;font-size:12px;color:#000;letter-spacing:-0.126px;">0407</div>
<div class="t " style="left:780px;top:372.6px;height:20px;line-height:20px;font-size:12px;color:#000;">应付票据</div>
<div class="t cell" style="left:242px;top:395px;height:20px;line-height:20px;font-size:12px;color:#000;letter-spacing:0.009px;">B512F9AF47233BADE053A20A480AFE9C</div>
<div class="t " style="left:492px;top:394.6px;height:20px;line-height:20px;font-size:12px;color:#000;">资产负债表</div>
<div class="t cell" style="left:589px;top:395px;height:20px;line-height:20px;font-size:12px;color:#000;letter-spacing:-0.080px;">02</div>
<div class="t cell" style="left:692.4px;top:395px;height:20px;line-height:20px;font-size:12px;color:#000;letter-spacing:-0.126px;">0408</div>
<div class="t " style="left:780px;top:394.6px;height:20px;line-height:20px;font-size:12px;color:#000;">应付账款</div>
<div class="t cell" style="left:242px;top:417px;height:20px;line-height:20px;font-size:12px;color:#000;letter-spacing:0.009px;">B512F9AF47243BADE053A20A480AFE9C</div>
<div class="t " style="left:492px;top:416.6px;height:20px;line-height:20px;font-size:12px;color:#000;">资产负债表</div>
<div class="t cell" style="left:589px;top:417px;height:20px;line-height:20px;font-size:12px;color:#000;letter-spacing:-0.080px;">03</div>
<div class="t cell" style="left:692.4px;top:417px;height:20px;line-height:20px;font-size:12px;color:#000;letter-spacing:-0.124px;">040801</div>
<div class="t " style="left:780px;top:416.6px;height:20px;line-height:20px;font-size:12px;color:#000;">外部往来</div>
<div class="t cell" style="left:242px;top:439px;height:20px;line-height:20px;font-size:12px;color:#000;letter-spacing:0.009px;">B512F9AF47253BADE053A20A480AFE9C</div>
<div class="t " style="left:492px;top:438.6px;height:20px;line-height:20px;font-size:12px;color:#000;">资产负债表</div>
<div class="t cell" style="left:589px;top:439px;height:20px;line-height:20px;font-size:12px;color:#000;letter-spacing:-0.080px;">02</div>
<div class="t cell" style="left:692.4px;top:439px;height:20px;line-height:20px;font-size:12px;color:#000;letter-spacing:-0.126px;">0409</div>
<div class="t " style="left:780px;top:438.6px;height:20px;line-height:20px;font-size:12px;color:#000;">预收款项</div>
<div class="t cell" style="left:242px;top:461px;height:20px;line-height:20px;font-size:12px;color:#000;letter-spacing:0.009px;">B512F9AF47263BADE053A20A480AFE9C</div>
<div class="t " style="left:492px;top:460.6px;height:20px;line-height:20px;font-size:12px;color:#000;">资产负债表</div>
<div class="t cell" style="left:589px;top:461px;height:20px;line-height:20px;font-size:12px;color:#000;letter-spacing:-0.080px;">03</div>
<div class="t cell" style="left:692.4px;top:461px;height:20px;line-height:20px;font-size:12px;color:#000;letter-spacing:-0.124px;">040901</div>
<div class="t " style="left:780px;top:460.6px;height:20px;line-height:20px;font-size:12px;color:#000;">外部往来</div>
<div class="t cell" style="left:242px;top:483px;height:20px;line-height:20px;font-size:12px;color:#000;letter-spacing:0.009px;">B512F9AF47273BADE053A20A480AFE9C</div>
<div class="t " style="left:492px;top:482.6px;height:20px;line-height:20px;font-size:12px;color:#000;">资产负债表</div>
<div class="t cell" style="left:589px;top:483px;height:20px;line-height:20px;font-size:12px;color:#000;letter-spacing:-0.080px;">02</div>
<div class="t cell" style="left:692.4px;top:483px;height:20px;line-height:20px;font-size:12px;color:#000;letter-spacing:-0.126px;">0410</div>
<div class="t " style="left:780px;top:482.6px;height:20px;line-height:20px;font-size:12px;color:#000;">合同负债</div>
<div class="t cell" style="left:242px;top:505px;height:20px;line-height:20px;font-size:12px;color:#000;letter-spacing:0.009px;">B512F9AF47283BADE053A20A480AFE9C</div>
<div class="t " style="left:492px;top:504.6px;height:20px;line-height:20px;font-size:12px;color:#000;">资产负债表</div>
<div class="t cell" style="left:589px;top:505px;height:20px;line-height:20px;font-size:12px;color:#000;letter-spacing:-0.080px;">02</div>
<div class="t cell" style="left:692.4px;top:505px;height:20px;line-height:20px;font-size:12px;color:#000;letter-spacing:0.097px;">0411</div>
<div class="t " style="left:780px;top:504.6px;height:20px;line-height:20px;font-size:12px;color:#000;">卖出回购金融资产款</div>
<div class="t cell" style="left:242px;top:527px;height:20px;line-height:20px;font-size:12px;color:#000;letter-spacing:0.009px;">B512F9AF47293BADE053A20A480AFE9C</div>
<div class="t " style="left:492px;top:526.6px;height:20px;line-height:20px;font-size:12px;color:#000;">资产负债表</div>
<div class="t cell" style="left:589px;top:527px;height:20px;line-height:20px;font-size:12px;color:#000;letter-spacing:-0.080px;">02</div>
<div class="t cell" style="left:692.4px;top:527px;height:20px;line-height:20px;font-size:12px;color:#000;letter-spacing:-0.126px;">0412</div>
<div class="t " style="left:780px;top:526.6px;height:20px;line-height:20px;font-size:12px;color:#000;">应付手续费及佣金</div>
<div class="t cell" style="left:242px;top:549px;height:20px;line-height:20px;font-size:12px;color:#000;letter-spacing:0.005px;">B512F9AF472A3BADE053A20A480AFE9C</div>
<div class="t " style="left:492px;top:548.6px;height:20px;line-height:20px;font-size:12px;color:#000;">资产负债表</div>
<div class="t cell" style="left:589px;top:549px;height:20px;line-height:20px;font-size:12px;color:#000;letter-spacing:-0.080px;">02</div>
<div class="t cell" style="left:692.4px;top:549px;height:20px;line-height:20px;font-size:12px;color:#000;letter-spacing:-0.126px;">0413</div>
<div class="t " style="left:780px;top:548.6px;height:20px;line-height:20px;font-size:12px;color:#000;">应付职工薪酬</div>
<div class="t cell" style="left:242px;top:571px;height:20px;line-height:20px;font-size:12px;color:#000;letter-spacing:0.005px;">B512F9AF472B3BADE053A20A480AFE9C</div>
<div class="t " style="left:492px;top:570.6px;height:20px;line-height:20px;font-size:12px;color:#000;">资产负债表</div>
<div class="t cell" style="left:589px;top:571px;height:20px;line-height:20px;font-size:12px;color:#000;letter-spacing:-0.080px;">02</div>
<div class="t cell" style="left:692.4px;top:571px;height:20px;line-height:20px;font-size:12px;color:#000;letter-spacing:-0.126px;">0414</div>
<div class="t " style="left:780px;top:570.6px;height:20px;line-height:20px;font-size:12px;color:#000;">应付税费</div>
<div style="left:933px;top:174px;width:15px;height:436px;background:#f0f0f0"></div>
<div style="left:934px;top:191px;width:14px;height:18px;background:#cdcdcd"></div>
<svg class="a" style="left:936.9px;top:182px" width="7.4" height="5.2" viewBox="0 0 7.4 5.2" ><path d="M0.6 4.6 L3.7 1.4 L6.8 4.6" fill="none" stroke="#4d4d4d" stroke-width="2"/></svg>
<svg class="a" style="left:936.9px;top:598px" width="7.4" height="5.2" viewBox="0 0 7.4 5.2" ><path d="M0.6 0.6 L3.7 3.8 L6.8 0.6" fill="none" stroke="#4d4d4d" stroke-width="2"/></svg>
<div style="left:245px;top:610px;width:17px;height:15px;background:#cdcdcd"></div>
<svg class="a" style="left:233.6px;top:613.8px" width="5.2" height="7.4" viewBox="0 0 5.2 7.4" ><path d="M4.6 0.6 L1.4 3.7 L4.6 6.8" fill="none" stroke="#4d4d4d" stroke-width="2"/></svg>
<svg class="a" style="left:921.4px;top:613.8px" width="5.2" height="7.4" viewBox="0 0 5.2 7.4" ><path d="M0.6 0.6 L3.8 3.7 L0.6 6.8" fill="none" stroke="#4d4d4d" stroke-width="2"/></svg>
<svg class="a" style="left:234px;top:631px" width="11" height="11" viewBox="0 0 11 11" ><path d="M5.5 0V11M0 5.5H11" stroke="#505050" stroke-width="2.6"/></svg>
<svg class="a" style="left:258px;top:635.1px" width="11" height="3" viewBox="0 0 11 3" ><path d="M0 1.4H11" stroke="#505050" stroke-width="2.6"/></svg>
<svg class="a" style="left:281px;top:631.1px" width="13" height="11" viewBox="0 0 13 11" ><path d="M1 5.8 L4.8 9.4 L12 1.4" fill="none" stroke="#c6c6c6" stroke-width="2.4"/></svg>
<svg class="a" style="left:307px;top:631.5px" width="10" height="10" viewBox="0 0 10 10" ><path d="M1 1L9 9M9 1L1 9" stroke="#c6c6c6" stroke-width="2.4"/></svg>
<svg class="a" style="left:330.4px;top:630.9px" width="11" height="11.6" viewBox="0 0 11 11.6" ><path d="M9.2 6.2 A4 4 0 1 1 7.6 2.6" fill="none" stroke="#505050" stroke-width="2"/><path d="M5.6 0 H10.2 V4.6Z" fill="#505050"/></svg>
<div style="left:355px;top:632px;width:9.8px;height:9.6px;background:#c9c9c9"></div>
<svg class="a" style="left:751px;top:632.4px" width="11.4" height="10" viewBox="0 0 11.4 10" ><path d="M1.1 0V10" stroke="#555" stroke-width="2.2"/><path d="M11.4 5H6" stroke="#555" stroke-width="2.4"/><path d="M3 5 L8 0.6 V9.4Z" fill="#555"/></svg>
<svg class="a" style="left:775px;top:632.4px" width="11" height="10" viewBox="0 0 11 10" ><path d="M10.8 5H4" stroke="#555" stroke-width="2.4"/><path d="M0.4 5 L5.6 0.6 V9.4Z" fill="#555"/></svg>
<div style="left:793px;top:630px;width:24px;height:17.4px;background:#fff"></div>
<div class="t " style="left:802.2px;top:628.8px;height:20px;line-height:20px;font-size:12px;color:#333;">1</div>
<svg class="a" style="left:823px;top:632.4px" width="11" height="10" viewBox="0 0 11 10" ><path d="M0.2 5H7" stroke="#555" stroke-width="2.4"/><path d="M10.6 5 L5.4 0.6 V9.4Z" fill="#555"/></svg>
<svg class="a" style="left:847px;top:632.4px" width="11.4" height="10" viewBox="0 0 11.4 10" ><path d="M10.3 0V10" stroke="#555" stroke-width="2.2"/><path d="M0 5H5.4" stroke="#555" stroke-width="2.4"/><path d="M8.4 5 L3.4 0.6 V9.4Z" fill="#555"/></svg>
<svg class="a" style="left:871.6px;top:632px" width="11" height="11" viewBox="0 0 11 11" ><g transform="translate(5.5 5.5)"><g fill="#5a5a5a"><rect x="-1.2" y="-5.4" width="2.4" height="10.8" transform="rotate(0)"/><rect x="-1.2" y="-5.4" width="2.4" height="10.8" transform="rotate(45)"/><rect x="-1.2" y="-5.4" width="2.4" height="10.8" transform="rotate(90)"/><rect x="-1.2" y="-5.4" width="2.4" height="10.8" transform="rotate(135)"/><circle r="3.9"/></g><circle r="2.1" fill="#f0f0f0"/></g></svg>
<div style="left:894px;top:630px;width:1px;height:16px;background:#d4d4d4"></div>
<div style="left:901px;top:626px;width:24px;height:21px;background:#cce4f7;border:1px solid #99c9ef;box-sizing:border-box"></div>
<svg class="a" style="left:906.4px;top:630px" width="14.6" height="14" viewBox="0 0 14.6 14" ><rect x="0.7" y="0.7" width="13.2" height="12.6" fill="none" stroke="#555" stroke-width="1.4"/><path d="M0 4.8H14.6M0 9.2H14.6M5 0V14M9.6 0V14" stroke="#555" stroke-width="1.2" fill="none"/></svg>
<svg class="a" style="left:929.4px;top:630px" width="14.4" height="13.6" viewBox="0 0 14.4 13.6" ><rect x="0.6" y="0.6" width="13.2" height="12.4" fill="none" stroke="#555" stroke-width="1.2"/><path d="M2.6 3.6h1.6M2.6 9.6h1.6" stroke="#555" stroke-width="1.3"/><rect x="5.6" y="2.6" width="6" height="2.4" fill="none" stroke="#555" stroke-width="1"/><rect x="5.6" y="8.4" width="6" height="2.4" fill="none" stroke="#555" stroke-width="1"/></svg>
<div style="left:952px;top:117px;width:134px;height:531px;background:#fff"></div>
<div style="left:1086px;top:117px;width:15px;height:26px;background:#fff"></div>
<div style="left:1086px;top:142px;width:15px;height:506px;background:#f0f0f0"></div>
<div style="left:1086px;top:159px;width:15px;height:79.5px;background:#cdcdcd"></div>
<svg class="a" style="left:1089.7px;top:148.2px" width="7.4" height="5.2" viewBox="0 0 7.4 5.2" ><path d="M0.6 4.6 L3.7 1.4 L6.8 4.6" fill="none" stroke="#4d4d4d" stroke-width="2"/></svg>
<svg class="a" style="left:1089.7px;top:637.6px" width="7.4" height="5.2" viewBox="0 0 7.4 5.2" ><path d="M0.6 0.6 L3.7 3.8 L6.8 0.6" fill="none" stroke="#4d4d4d" stroke-width="2"/></svg>
<svg class="a" style="left:980.5px;top:120.5px" width="17" height="17" viewBox="0 0 17 17" ><circle cx="8.5" cy="8.5" r="7.2" fill="none" stroke="#1a82f0" stroke-width="2"/><path d="M8.5 7.6V12.2" stroke="#1a82f0" stroke-width="2.2"/><circle cx="8.5" cy="5.1" r="1.25" fill="#1a82f0"/></svg>
<svg class="a" style="left:1007px;top:122px" width="14.4" height="14" viewBox="0 0 14.4 14" ><rect x="0.7" y="0.7" width="12.8" height="12.4" rx="1" fill="none" stroke="#4a4a4a" stroke-width="1.3"/><g fill="none" stroke="#444" stroke-width="1.2"><path d="M2.5 5.3V8.7H3.3C4.2 8.7 4.5 8 4.5 7C4.5 6 4.2 5.3 3.3 5.3Z"/><path d="M6.2 5.3V8.7H7C7.9 8.7 8.2 8 8.2 7C8.2 6 7.9 5.3 7 5.3Z"/><path d="M9.9 5V8.7H12"/></g></svg>
<svg class="a" style="left:1032px;top:122.4px" width="13.4" height="13" viewBox="0 0 13.4 13" ><rect x="0.6" y="1.1" width="3.2" height="11" rx="0.9" fill="#fff" stroke="#4a4a4a" stroke-width="1.1"/><path d="M3.8 2.8H7.6M3.8 10.6H7.6" fill="none" stroke="#4a4a4a" stroke-width="1.1"/><path d="M6.2 1 L8.4 2.8 L6.2 4.6Z M6.2 8.8 L8.4 10.6 L6.2 12.4Z" fill="#4a4a4a"/><rect x="9.2" y="0.6" width="4.2" height="4.2" rx="0.7" fill="#4a4a4a"/><rect x="9.2" y="8.6" width="4.2" height="4.2" rx="0.7" fill="#4a4a4a"/></svg>
<svg class="a" style="left:1057px;top:122.4px" width="13.4" height="13" viewBox="0 0 13.4 13" ><rect x="9.4" y="1.1" width="3.2" height="11" rx="0.9" fill="#fff" stroke="#4a4a4a" stroke-width="1.1"/><path d="M4 2.8H7.4M4 10.6H7.4" fill="none" stroke="#4a4a4a" stroke-width="1.1"/><path d="M6.4 1 L8.6 2.8 L6.4 4.6Z M6.4 8.8 L8.6 10.6 L6.4 12.4Z" fill="#4a4a4a"/><rect x="0" y="0.6" width="4.2" height="4.2" rx="0.7" fill="#4a4a4a"/><rect x="0" y="8.6" width="4.2" height="4.2" rx="0.7" fill="#4a4a4a"/></svg>
<svg class="a" style="left:966px;top:156px" width="52" height="50" viewBox="0 0 52 50" ><rect x="1" y="1" width="50" height="48" rx="3.4" fill="#fff" stroke="#4a9ae0" stroke-width="2"/><path d="M0 3.4 a3.4 3.4 0 0 1 3.4 -3.4 h45.2 a3.4 3.4 0 0 1 3.4 3.4 v10.2 h-52 z" fill="#3a84c2"/><path d="M0 25.7333 H52M0 37.8667 H52M17.3333 13.6 V50M34.6667 13.6 V50" stroke="#4a9ae0" stroke-width="2" fill="none"/></svg>
<div style="left:1032px;top:160px;width:46px;height:22px;overflow:hidden"><div class="t" style="left:0;top:0;height:22px;line-height:22px;font-size:13px;font-weight:bold;color:#333;letter-spacing:0.15px">finance_dim_dic</div></div>
<div class="t " style="left:1032px;top:184.3px;height:20px;line-height:20px;font-size:12px;color:#000;"><span style="color:#9a9a9a">表</span></div>
<div class="t " style="left:968px;top:231.4px;height:20px;line-height:20px;font-size:13px;color:#000;"><span style="font-size:13.6px;color:#7c7c7c;letter-spacing:0.4px">所有者</span></div>
<div class="t pv" style="left:968px;top:251.1px;height:20px;line-height:20px;font-size:12px;color:#444;letter-spacing:-0.064px;">C##ORACLE</div>
<div class="t " style="left:968px;top:283px;height:20px;line-height:20px;font-size:13px;color:#000;"><span style="font-size:13.6px;color:#7c7c7c;letter-spacing:0.4px">组</span></div>
<div class="t pv" style="left:968px;top:302.7px;height:20px;line-height:20px;font-size:12px;color:#444;letter-spacing:1.200px;">--</div>
<div class="t " style="left:968px;top:333.4px;height:20px;line-height:20px;font-size:13px;color:#000;"><span style="font-size:13.6px;color:#7c7c7c;letter-spacing:0.4px">行</span></div>
<div class="t pv" style="left:968px;top:353.1px;height:20px;line-height:20px;font-size:12px;color:#444;letter-spacing:0.190px;">382</div>
<div class="t " style="left:968px;top:384.8px;height:20px;line-height:20px;font-size:13px;color:#000;"><span style="font-size:13.6px;color:#7c7c7c;letter-spacing:0.4px">表空间名</span></div>
<div class="t pv" style="left:968px;top:404.5px;height:20px;line-height:20px;font-size:12px;color:#444;letter-spacing:-0.669px;">USERS</div>
<div class="t " style="left:968px;top:435.8px;height:20px;line-height:20px;font-size:13px;color:#000;"><span style="font-size:13.6px;color:#7c7c7c;letter-spacing:0.4px">表类型</span></div>
<div class="t pv" style="left:968px;top:455.5px;height:20px;line-height:20px;font-size:12px;color:#444;letter-spacing:0.805px;">Normal</div>
<div class="t " style="left:968px;top:486.4px;height:20px;line-height:20px;font-size:13px;color:#000;"><span style="font-size:13.6px;color:#7c7c7c;letter-spacing:0.4px">状态</span></div>
<div class="t pv" style="left:968px;top:506.1px;height:20px;line-height:20px;font-size:12px;color:#444;letter-spacing:0.561px;">Valid</div>
<div class="t " style="left:968px;top:537.8px;height:20px;line-height:20px;font-size:13px;color:#000;"><span style="font-size:13.6px;color:#7c7c7c;letter-spacing:0.4px">已生成</span></div>
<div class="t " style="left:968px;top:557px;height:20px;line-height:20px;font-size:12px;color:#000;"><span style="color:#444">否</span></div>
<div class="t " style="left:968px;top:589.2px;height:20px;line-height:20px;font-size:13px;color:#000;"><span style="font-size:13.6px;color:#7c7c7c;letter-spacing:0.4px">群集所有者</span></div>
<div class="t pv" style="left:968px;top:608.9px;height:20px;line-height:20px;font-size:12px;color:#444;letter-spacing:1.200px;">--</div>
<div style="left:968px;top:639.6px;width:100px;height:8.4px;overflow:hidden"><div class="t" style="left:0;top:0;height:20px;line-height:20px"><span style="font-size:13.6px;color:#7c7c7c;letter-spacing:0.4px">群集名</span></div></div>
<div style="left:0px;top:648px;width:1101px;height:1px;background:#dcdcdc"></div>
<div style="left:0px;top:649px;width:1101px;height:21px;background:#f0f0f0"></div>
<div style="left:227px;top:650px;width:1px;height:19px;background:#d4d4d4"></div>
<div style="left:727.5px;top:650px;width:1px;height:19px;background:#d4d4d4"></div>
<div style="left:797px;top:650px;width:1px;height:19px;background:#d4d4d4"></div>
<div style="left:1047px;top:650px;width:1px;height:19px;background:#d4d4d4"></div>
<div style="left:233px;top:649.6px;width:489.9px;height:20px;overflow:hidden"><div class="t st" style="left:0;top:0;height:20px;line-height:20px"><span style="letter-spacing:-0.445px">SELECT&nbsp;</span><span style="letter-spacing:0.155px">"C##ORACLE"</span><span style="letter-spacing:0.229px">."finance_dim_dic"</span><span style="letter-spacing:0.611px">.*,ROWID&nbsp;</span><span style="letter-spacing:0.063px">"NAVICAT_ROWID"&nbsp;</span><span style="letter-spacing:0.106px">FROM&nbsp;</span><span style="letter-spacing:0.486px">"C##OR</span><span>ACLE"</span></div></div>
<div class="t st2" style="left:802px;top:649.8px;height:20px;line-height:20px;font-size:12px;color:#000;">第<span style="letter-spacing:0.552px">&nbsp;1&nbsp;</span>条记录<span style="letter-spacing:2.578px">&nbsp;(</span>共<span style="letter-spacing:0.259px">&nbsp;382&nbsp;</span>条<span style="letter-spacing:2.328px">)&nbsp;</span>于第<span style="letter-spacing:0.719px">&nbsp;1&nbsp;</span>页</div>
<div style="left:1051px;top:649.4px;width:23px;height:19.6px;background:#cce4f7;border:1px solid #99c9ef;box-sizing:border-box"></div>
<div style="left:1074px;top:649.4px;width:23px;height:19.6px;background:#cce4f7;border:1px solid #99c9ef;border-left:none;box-sizing:border-box"></div>
<svg class="a" style="left:1058px;top:654px" width="12" height="12" viewBox="0 0 12 12" ><rect x="0.6" y="0.6" width="10.8" height="10.8" fill="none" stroke="#555" stroke-width="1.2"/><rect x="2.2" y="1.6" width="2.8" height="8.8" fill="#555"/></svg>
<svg class="a" style="left:1081px;top:654px" width="12" height="12" viewBox="0 0 12 12" ><rect x="0.6" y="0.6" width="10.8" height="10.8" fill="none" stroke="#555" stroke-width="1.2"/><rect x="7" y="1.6" width="2.8" height="8.8" fill="#555"/></svg>
<div style="left:0px;top:669.4px;width:1101px;height:5.6px;background:linear-gradient(#626262 0,#7c7c7c 18%,#9a9a9a 42%,#b6b6b6 100%)"></div>
</body></html>
